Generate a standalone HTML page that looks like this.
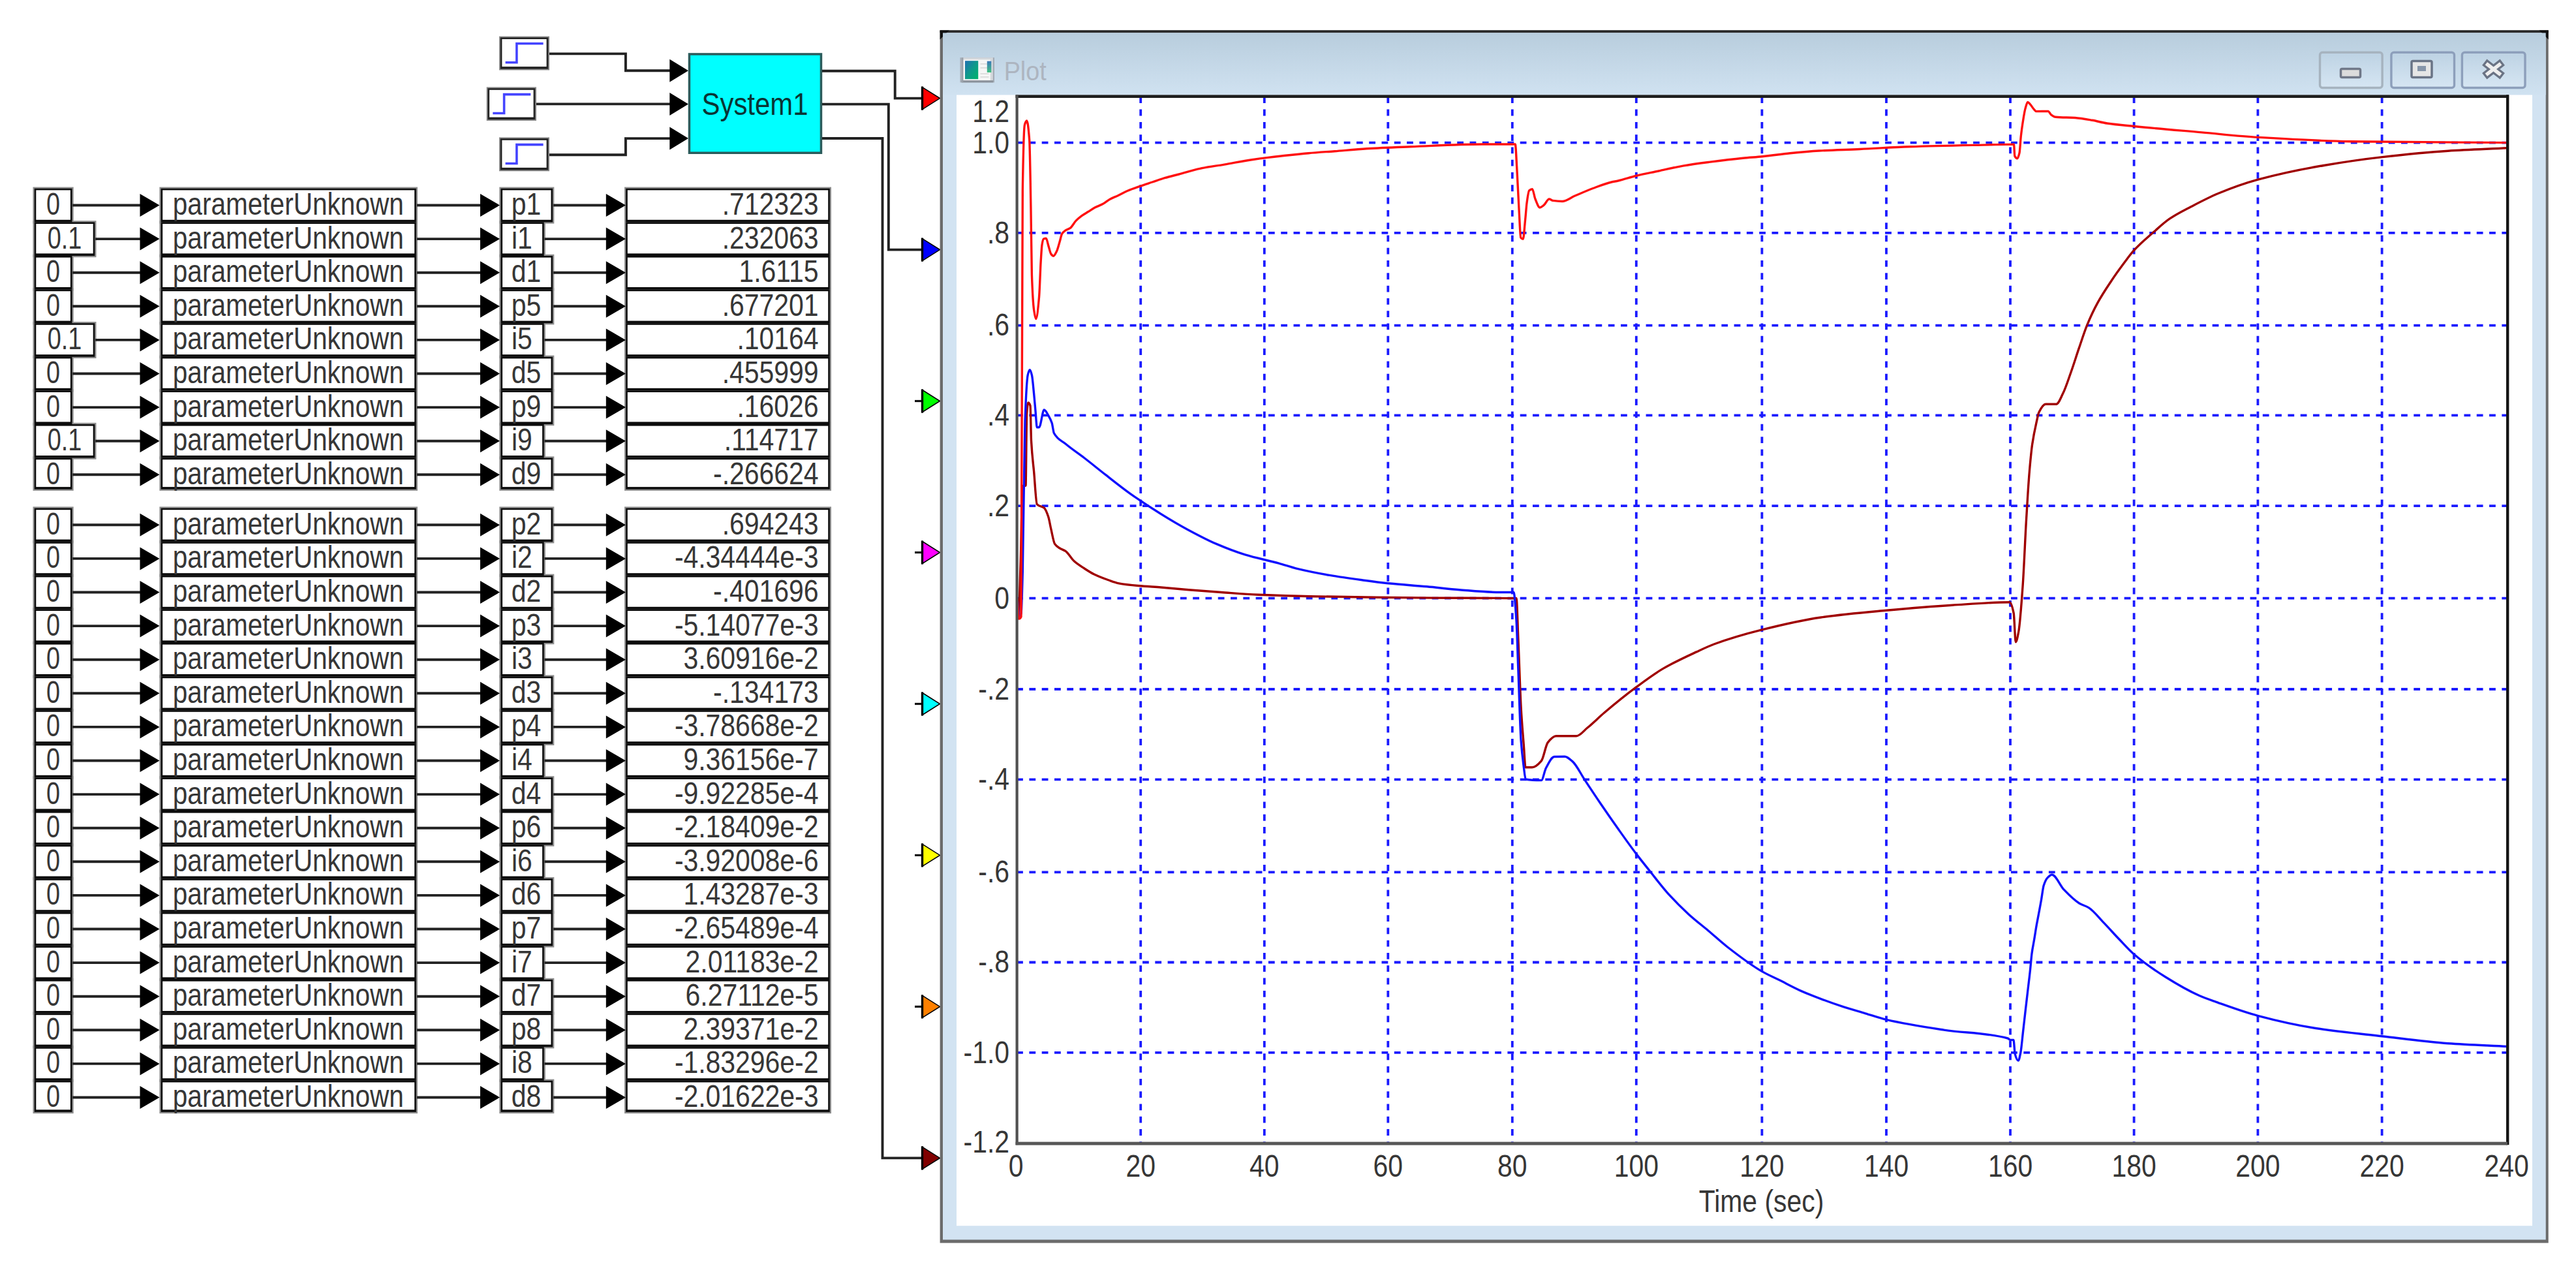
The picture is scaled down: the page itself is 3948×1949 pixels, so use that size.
<!DOCTYPE html>
<html><head><meta charset="utf-8"><style>
html,body{margin:0;padding:0;background:#fff;}
body{width:3948px;height:1949px;overflow:hidden;}
svg{display:block;}
text{font-family:"Liberation Sans", sans-serif;}
</style></head><body>
<div id="wrap"><svg width="3948" height="1949" viewBox="0 0 3948 1949">
<rect x="50.5" y="286.6" width="62.2" height="56.0" fill="#8e8e8e"/>
<rect x="244.4" y="286.6" width="395.6" height="56.0" fill="#8e8e8e"/>
<rect x="765.3" y="286.6" width="84.0" height="56.0" fill="#8e8e8e"/>
<rect x="957.0" y="286.6" width="317.0" height="56.0" fill="#8e8e8e"/>
<rect x="50.5" y="338.2" width="97.0" height="56.0" fill="#8e8e8e"/>
<rect x="244.4" y="338.2" width="395.6" height="56.0" fill="#8e8e8e"/>
<rect x="765.3" y="338.2" width="70.6" height="56.0" fill="#8e8e8e"/>
<rect x="957.0" y="338.2" width="317.0" height="56.0" fill="#8e8e8e"/>
<rect x="50.5" y="389.8" width="62.2" height="56.0" fill="#8e8e8e"/>
<rect x="244.4" y="389.8" width="395.6" height="56.0" fill="#8e8e8e"/>
<rect x="765.3" y="389.8" width="84.0" height="56.0" fill="#8e8e8e"/>
<rect x="957.0" y="389.8" width="317.0" height="56.0" fill="#8e8e8e"/>
<rect x="50.5" y="441.4" width="62.2" height="56.0" fill="#8e8e8e"/>
<rect x="244.4" y="441.4" width="395.6" height="56.0" fill="#8e8e8e"/>
<rect x="765.3" y="441.4" width="84.0" height="56.0" fill="#8e8e8e"/>
<rect x="957.0" y="441.4" width="317.0" height="56.0" fill="#8e8e8e"/>
<rect x="50.5" y="493.0" width="97.0" height="56.0" fill="#8e8e8e"/>
<rect x="244.4" y="493.0" width="395.6" height="56.0" fill="#8e8e8e"/>
<rect x="765.3" y="493.0" width="70.6" height="56.0" fill="#8e8e8e"/>
<rect x="957.0" y="493.0" width="317.0" height="56.0" fill="#8e8e8e"/>
<rect x="50.5" y="544.6" width="62.2" height="56.0" fill="#8e8e8e"/>
<rect x="244.4" y="544.6" width="395.6" height="56.0" fill="#8e8e8e"/>
<rect x="765.3" y="544.6" width="84.0" height="56.0" fill="#8e8e8e"/>
<rect x="957.0" y="544.6" width="317.0" height="56.0" fill="#8e8e8e"/>
<rect x="50.5" y="596.2" width="62.2" height="56.0" fill="#8e8e8e"/>
<rect x="244.4" y="596.2" width="395.6" height="56.0" fill="#8e8e8e"/>
<rect x="765.3" y="596.2" width="84.0" height="56.0" fill="#8e8e8e"/>
<rect x="957.0" y="596.2" width="317.0" height="56.0" fill="#8e8e8e"/>
<rect x="50.5" y="647.8" width="97.0" height="56.0" fill="#8e8e8e"/>
<rect x="244.4" y="647.8" width="395.6" height="56.0" fill="#8e8e8e"/>
<rect x="765.3" y="647.8" width="70.6" height="56.0" fill="#8e8e8e"/>
<rect x="957.0" y="647.8" width="317.0" height="56.0" fill="#8e8e8e"/>
<rect x="50.5" y="699.4" width="62.2" height="52.5" fill="#8e8e8e"/>
<rect x="244.4" y="699.4" width="395.6" height="52.5" fill="#8e8e8e"/>
<rect x="765.3" y="699.4" width="84.0" height="52.5" fill="#8e8e8e"/>
<rect x="957.0" y="699.4" width="317.0" height="52.5" fill="#8e8e8e"/>
<rect x="50.5" y="776.4" width="62.2" height="56.0" fill="#8e8e8e"/>
<rect x="244.4" y="776.4" width="395.6" height="56.0" fill="#8e8e8e"/>
<rect x="765.3" y="776.4" width="84.0" height="56.0" fill="#8e8e8e"/>
<rect x="957.0" y="776.4" width="317.0" height="56.0" fill="#8e8e8e"/>
<rect x="50.5" y="828.0" width="62.2" height="56.0" fill="#8e8e8e"/>
<rect x="244.4" y="828.0" width="395.6" height="56.0" fill="#8e8e8e"/>
<rect x="765.3" y="828.0" width="70.6" height="56.0" fill="#8e8e8e"/>
<rect x="957.0" y="828.0" width="317.0" height="56.0" fill="#8e8e8e"/>
<rect x="50.5" y="879.6" width="62.2" height="56.0" fill="#8e8e8e"/>
<rect x="244.4" y="879.6" width="395.6" height="56.0" fill="#8e8e8e"/>
<rect x="765.3" y="879.6" width="84.0" height="56.0" fill="#8e8e8e"/>
<rect x="957.0" y="879.6" width="317.0" height="56.0" fill="#8e8e8e"/>
<rect x="50.5" y="931.2" width="62.2" height="56.0" fill="#8e8e8e"/>
<rect x="244.4" y="931.2" width="395.6" height="56.0" fill="#8e8e8e"/>
<rect x="765.3" y="931.2" width="84.0" height="56.0" fill="#8e8e8e"/>
<rect x="957.0" y="931.2" width="317.0" height="56.0" fill="#8e8e8e"/>
<rect x="50.5" y="982.8" width="62.2" height="56.0" fill="#8e8e8e"/>
<rect x="244.4" y="982.8" width="395.6" height="56.0" fill="#8e8e8e"/>
<rect x="765.3" y="982.8" width="70.6" height="56.0" fill="#8e8e8e"/>
<rect x="957.0" y="982.8" width="317.0" height="56.0" fill="#8e8e8e"/>
<rect x="50.5" y="1034.4" width="62.2" height="56.0" fill="#8e8e8e"/>
<rect x="244.4" y="1034.4" width="395.6" height="56.0" fill="#8e8e8e"/>
<rect x="765.3" y="1034.4" width="84.0" height="56.0" fill="#8e8e8e"/>
<rect x="957.0" y="1034.4" width="317.0" height="56.0" fill="#8e8e8e"/>
<rect x="50.5" y="1086.0" width="62.2" height="56.0" fill="#8e8e8e"/>
<rect x="244.4" y="1086.0" width="395.6" height="56.0" fill="#8e8e8e"/>
<rect x="765.3" y="1086.0" width="84.0" height="56.0" fill="#8e8e8e"/>
<rect x="957.0" y="1086.0" width="317.0" height="56.0" fill="#8e8e8e"/>
<rect x="50.5" y="1137.6" width="62.2" height="56.0" fill="#8e8e8e"/>
<rect x="244.4" y="1137.6" width="395.6" height="56.0" fill="#8e8e8e"/>
<rect x="765.3" y="1137.6" width="70.6" height="56.0" fill="#8e8e8e"/>
<rect x="957.0" y="1137.6" width="317.0" height="56.0" fill="#8e8e8e"/>
<rect x="50.5" y="1189.2" width="62.2" height="56.0" fill="#8e8e8e"/>
<rect x="244.4" y="1189.2" width="395.6" height="56.0" fill="#8e8e8e"/>
<rect x="765.3" y="1189.2" width="84.0" height="56.0" fill="#8e8e8e"/>
<rect x="957.0" y="1189.2" width="317.0" height="56.0" fill="#8e8e8e"/>
<rect x="50.5" y="1240.8" width="62.2" height="56.0" fill="#8e8e8e"/>
<rect x="244.4" y="1240.8" width="395.6" height="56.0" fill="#8e8e8e"/>
<rect x="765.3" y="1240.8" width="84.0" height="56.0" fill="#8e8e8e"/>
<rect x="957.0" y="1240.8" width="317.0" height="56.0" fill="#8e8e8e"/>
<rect x="50.5" y="1292.4" width="62.2" height="56.0" fill="#8e8e8e"/>
<rect x="244.4" y="1292.4" width="395.6" height="56.0" fill="#8e8e8e"/>
<rect x="765.3" y="1292.4" width="70.6" height="56.0" fill="#8e8e8e"/>
<rect x="957.0" y="1292.4" width="317.0" height="56.0" fill="#8e8e8e"/>
<rect x="50.5" y="1344.0" width="62.2" height="56.0" fill="#8e8e8e"/>
<rect x="244.4" y="1344.0" width="395.6" height="56.0" fill="#8e8e8e"/>
<rect x="765.3" y="1344.0" width="84.0" height="56.0" fill="#8e8e8e"/>
<rect x="957.0" y="1344.0" width="317.0" height="56.0" fill="#8e8e8e"/>
<rect x="50.5" y="1395.6" width="62.2" height="56.0" fill="#8e8e8e"/>
<rect x="244.4" y="1395.6" width="395.6" height="56.0" fill="#8e8e8e"/>
<rect x="765.3" y="1395.6" width="84.0" height="56.0" fill="#8e8e8e"/>
<rect x="957.0" y="1395.6" width="317.0" height="56.0" fill="#8e8e8e"/>
<rect x="50.5" y="1447.2" width="62.2" height="56.0" fill="#8e8e8e"/>
<rect x="244.4" y="1447.2" width="395.6" height="56.0" fill="#8e8e8e"/>
<rect x="765.3" y="1447.2" width="70.6" height="56.0" fill="#8e8e8e"/>
<rect x="957.0" y="1447.2" width="317.0" height="56.0" fill="#8e8e8e"/>
<rect x="50.5" y="1498.8" width="62.2" height="56.0" fill="#8e8e8e"/>
<rect x="244.4" y="1498.8" width="395.6" height="56.0" fill="#8e8e8e"/>
<rect x="765.3" y="1498.8" width="84.0" height="56.0" fill="#8e8e8e"/>
<rect x="957.0" y="1498.8" width="317.0" height="56.0" fill="#8e8e8e"/>
<rect x="50.5" y="1550.4" width="62.2" height="56.0" fill="#8e8e8e"/>
<rect x="244.4" y="1550.4" width="395.6" height="56.0" fill="#8e8e8e"/>
<rect x="765.3" y="1550.4" width="84.0" height="56.0" fill="#8e8e8e"/>
<rect x="957.0" y="1550.4" width="317.0" height="56.0" fill="#8e8e8e"/>
<rect x="50.5" y="1602.0" width="62.2" height="56.0" fill="#8e8e8e"/>
<rect x="244.4" y="1602.0" width="395.6" height="56.0" fill="#8e8e8e"/>
<rect x="765.3" y="1602.0" width="70.6" height="56.0" fill="#8e8e8e"/>
<rect x="957.0" y="1602.0" width="317.0" height="56.0" fill="#8e8e8e"/>
<rect x="50.5" y="1653.6" width="62.2" height="52.5" fill="#8e8e8e"/>
<rect x="244.4" y="1653.6" width="395.6" height="52.5" fill="#8e8e8e"/>
<rect x="765.3" y="1653.6" width="84.0" height="52.5" fill="#8e8e8e"/>
<rect x="957.0" y="1653.6" width="317.0" height="52.5" fill="#8e8e8e"/>
<rect x="52.7" y="288.8" width="57.8" height="51.6" fill="#0c0c0c"/>
<rect x="246.6" y="288.8" width="391.2" height="51.6" fill="#0c0c0c"/>
<rect x="767.5" y="288.8" width="79.6" height="51.6" fill="#0c0c0c"/>
<rect x="959.2" y="288.8" width="312.6" height="51.6" fill="#0c0c0c"/>
<rect x="52.7" y="340.4" width="92.6" height="51.6" fill="#0c0c0c"/>
<rect x="246.6" y="340.4" width="391.2" height="51.6" fill="#0c0c0c"/>
<rect x="767.5" y="340.4" width="66.2" height="51.6" fill="#0c0c0c"/>
<rect x="959.2" y="340.4" width="312.6" height="51.6" fill="#0c0c0c"/>
<rect x="52.7" y="392.0" width="57.8" height="51.6" fill="#0c0c0c"/>
<rect x="246.6" y="392.0" width="391.2" height="51.6" fill="#0c0c0c"/>
<rect x="767.5" y="392.0" width="79.6" height="51.6" fill="#0c0c0c"/>
<rect x="959.2" y="392.0" width="312.6" height="51.6" fill="#0c0c0c"/>
<rect x="52.7" y="443.6" width="57.8" height="51.6" fill="#0c0c0c"/>
<rect x="246.6" y="443.6" width="391.2" height="51.6" fill="#0c0c0c"/>
<rect x="767.5" y="443.6" width="79.6" height="51.6" fill="#0c0c0c"/>
<rect x="959.2" y="443.6" width="312.6" height="51.6" fill="#0c0c0c"/>
<rect x="52.7" y="495.2" width="92.6" height="51.6" fill="#0c0c0c"/>
<rect x="246.6" y="495.2" width="391.2" height="51.6" fill="#0c0c0c"/>
<rect x="767.5" y="495.2" width="66.2" height="51.6" fill="#0c0c0c"/>
<rect x="959.2" y="495.2" width="312.6" height="51.6" fill="#0c0c0c"/>
<rect x="52.7" y="546.8" width="57.8" height="51.6" fill="#0c0c0c"/>
<rect x="246.6" y="546.8" width="391.2" height="51.6" fill="#0c0c0c"/>
<rect x="767.5" y="546.8" width="79.6" height="51.6" fill="#0c0c0c"/>
<rect x="959.2" y="546.8" width="312.6" height="51.6" fill="#0c0c0c"/>
<rect x="52.7" y="598.4" width="57.8" height="51.6" fill="#0c0c0c"/>
<rect x="246.6" y="598.4" width="391.2" height="51.6" fill="#0c0c0c"/>
<rect x="767.5" y="598.4" width="79.6" height="51.6" fill="#0c0c0c"/>
<rect x="959.2" y="598.4" width="312.6" height="51.6" fill="#0c0c0c"/>
<rect x="52.7" y="650.0" width="92.6" height="51.6" fill="#0c0c0c"/>
<rect x="246.6" y="650.0" width="391.2" height="51.6" fill="#0c0c0c"/>
<rect x="767.5" y="650.0" width="66.2" height="51.6" fill="#0c0c0c"/>
<rect x="959.2" y="650.0" width="312.6" height="51.6" fill="#0c0c0c"/>
<rect x="52.7" y="701.6" width="57.8" height="48.1" fill="#0c0c0c"/>
<rect x="246.6" y="701.6" width="391.2" height="48.1" fill="#0c0c0c"/>
<rect x="767.5" y="701.6" width="79.6" height="48.1" fill="#0c0c0c"/>
<rect x="959.2" y="701.6" width="312.6" height="48.1" fill="#0c0c0c"/>
<rect x="52.7" y="778.6" width="57.8" height="51.6" fill="#0c0c0c"/>
<rect x="246.6" y="778.6" width="391.2" height="51.6" fill="#0c0c0c"/>
<rect x="767.5" y="778.6" width="79.6" height="51.6" fill="#0c0c0c"/>
<rect x="959.2" y="778.6" width="312.6" height="51.6" fill="#0c0c0c"/>
<rect x="52.7" y="830.2" width="57.8" height="51.6" fill="#0c0c0c"/>
<rect x="246.6" y="830.2" width="391.2" height="51.6" fill="#0c0c0c"/>
<rect x="767.5" y="830.2" width="66.2" height="51.6" fill="#0c0c0c"/>
<rect x="959.2" y="830.2" width="312.6" height="51.6" fill="#0c0c0c"/>
<rect x="52.7" y="881.8" width="57.8" height="51.6" fill="#0c0c0c"/>
<rect x="246.6" y="881.8" width="391.2" height="51.6" fill="#0c0c0c"/>
<rect x="767.5" y="881.8" width="79.6" height="51.6" fill="#0c0c0c"/>
<rect x="959.2" y="881.8" width="312.6" height="51.6" fill="#0c0c0c"/>
<rect x="52.7" y="933.4" width="57.8" height="51.6" fill="#0c0c0c"/>
<rect x="246.6" y="933.4" width="391.2" height="51.6" fill="#0c0c0c"/>
<rect x="767.5" y="933.4" width="79.6" height="51.6" fill="#0c0c0c"/>
<rect x="959.2" y="933.4" width="312.6" height="51.6" fill="#0c0c0c"/>
<rect x="52.7" y="985.0" width="57.8" height="51.6" fill="#0c0c0c"/>
<rect x="246.6" y="985.0" width="391.2" height="51.6" fill="#0c0c0c"/>
<rect x="767.5" y="985.0" width="66.2" height="51.6" fill="#0c0c0c"/>
<rect x="959.2" y="985.0" width="312.6" height="51.6" fill="#0c0c0c"/>
<rect x="52.7" y="1036.6" width="57.8" height="51.6" fill="#0c0c0c"/>
<rect x="246.6" y="1036.6" width="391.2" height="51.6" fill="#0c0c0c"/>
<rect x="767.5" y="1036.6" width="79.6" height="51.6" fill="#0c0c0c"/>
<rect x="959.2" y="1036.6" width="312.6" height="51.6" fill="#0c0c0c"/>
<rect x="52.7" y="1088.2" width="57.8" height="51.6" fill="#0c0c0c"/>
<rect x="246.6" y="1088.2" width="391.2" height="51.6" fill="#0c0c0c"/>
<rect x="767.5" y="1088.2" width="79.6" height="51.6" fill="#0c0c0c"/>
<rect x="959.2" y="1088.2" width="312.6" height="51.6" fill="#0c0c0c"/>
<rect x="52.7" y="1139.8" width="57.8" height="51.6" fill="#0c0c0c"/>
<rect x="246.6" y="1139.8" width="391.2" height="51.6" fill="#0c0c0c"/>
<rect x="767.5" y="1139.8" width="66.2" height="51.6" fill="#0c0c0c"/>
<rect x="959.2" y="1139.8" width="312.6" height="51.6" fill="#0c0c0c"/>
<rect x="52.7" y="1191.4" width="57.8" height="51.6" fill="#0c0c0c"/>
<rect x="246.6" y="1191.4" width="391.2" height="51.6" fill="#0c0c0c"/>
<rect x="767.5" y="1191.4" width="79.6" height="51.6" fill="#0c0c0c"/>
<rect x="959.2" y="1191.4" width="312.6" height="51.6" fill="#0c0c0c"/>
<rect x="52.7" y="1243.0" width="57.8" height="51.6" fill="#0c0c0c"/>
<rect x="246.6" y="1243.0" width="391.2" height="51.6" fill="#0c0c0c"/>
<rect x="767.5" y="1243.0" width="79.6" height="51.6" fill="#0c0c0c"/>
<rect x="959.2" y="1243.0" width="312.6" height="51.6" fill="#0c0c0c"/>
<rect x="52.7" y="1294.6" width="57.8" height="51.6" fill="#0c0c0c"/>
<rect x="246.6" y="1294.6" width="391.2" height="51.6" fill="#0c0c0c"/>
<rect x="767.5" y="1294.6" width="66.2" height="51.6" fill="#0c0c0c"/>
<rect x="959.2" y="1294.6" width="312.6" height="51.6" fill="#0c0c0c"/>
<rect x="52.7" y="1346.2" width="57.8" height="51.6" fill="#0c0c0c"/>
<rect x="246.6" y="1346.2" width="391.2" height="51.6" fill="#0c0c0c"/>
<rect x="767.5" y="1346.2" width="79.6" height="51.6" fill="#0c0c0c"/>
<rect x="959.2" y="1346.2" width="312.6" height="51.6" fill="#0c0c0c"/>
<rect x="52.7" y="1397.8" width="57.8" height="51.6" fill="#0c0c0c"/>
<rect x="246.6" y="1397.8" width="391.2" height="51.6" fill="#0c0c0c"/>
<rect x="767.5" y="1397.8" width="79.6" height="51.6" fill="#0c0c0c"/>
<rect x="959.2" y="1397.8" width="312.6" height="51.6" fill="#0c0c0c"/>
<rect x="52.7" y="1449.4" width="57.8" height="51.6" fill="#0c0c0c"/>
<rect x="246.6" y="1449.4" width="391.2" height="51.6" fill="#0c0c0c"/>
<rect x="767.5" y="1449.4" width="66.2" height="51.6" fill="#0c0c0c"/>
<rect x="959.2" y="1449.4" width="312.6" height="51.6" fill="#0c0c0c"/>
<rect x="52.7" y="1501.0" width="57.8" height="51.6" fill="#0c0c0c"/>
<rect x="246.6" y="1501.0" width="391.2" height="51.6" fill="#0c0c0c"/>
<rect x="767.5" y="1501.0" width="79.6" height="51.6" fill="#0c0c0c"/>
<rect x="959.2" y="1501.0" width="312.6" height="51.6" fill="#0c0c0c"/>
<rect x="52.7" y="1552.6" width="57.8" height="51.6" fill="#0c0c0c"/>
<rect x="246.6" y="1552.6" width="391.2" height="51.6" fill="#0c0c0c"/>
<rect x="767.5" y="1552.6" width="79.6" height="51.6" fill="#0c0c0c"/>
<rect x="959.2" y="1552.6" width="312.6" height="51.6" fill="#0c0c0c"/>
<rect x="52.7" y="1604.2" width="57.8" height="51.6" fill="#0c0c0c"/>
<rect x="246.6" y="1604.2" width="391.2" height="51.6" fill="#0c0c0c"/>
<rect x="767.5" y="1604.2" width="66.2" height="51.6" fill="#0c0c0c"/>
<rect x="959.2" y="1604.2" width="312.6" height="51.6" fill="#0c0c0c"/>
<rect x="52.7" y="1655.8" width="57.8" height="48.1" fill="#0c0c0c"/>
<rect x="246.6" y="1655.8" width="391.2" height="48.1" fill="#0c0c0c"/>
<rect x="767.5" y="1655.8" width="79.6" height="48.1" fill="#0c0c0c"/>
<rect x="959.2" y="1655.8" width="312.6" height="48.1" fill="#0c0c0c"/>
<rect x="55.3" y="291.4" width="52.6" height="45.4" fill="#fff"/>
<rect x="249.2" y="291.4" width="386.0" height="45.4" fill="#fff"/>
<rect x="770.1" y="291.4" width="74.4" height="45.4" fill="#fff"/>
<rect x="961.8" y="291.4" width="307.4" height="45.4" fill="#fff"/>
<rect x="55.3" y="343.0" width="87.4" height="45.4" fill="#fff"/>
<rect x="249.2" y="343.0" width="386.0" height="45.4" fill="#fff"/>
<rect x="770.1" y="343.0" width="61.0" height="45.4" fill="#fff"/>
<rect x="961.8" y="343.0" width="307.4" height="45.4" fill="#fff"/>
<rect x="55.3" y="394.6" width="52.6" height="45.4" fill="#fff"/>
<rect x="249.2" y="394.6" width="386.0" height="45.4" fill="#fff"/>
<rect x="770.1" y="394.6" width="74.4" height="45.4" fill="#fff"/>
<rect x="961.8" y="394.6" width="307.4" height="45.4" fill="#fff"/>
<rect x="55.3" y="446.2" width="52.6" height="45.4" fill="#fff"/>
<rect x="249.2" y="446.2" width="386.0" height="45.4" fill="#fff"/>
<rect x="770.1" y="446.2" width="74.4" height="45.4" fill="#fff"/>
<rect x="961.8" y="446.2" width="307.4" height="45.4" fill="#fff"/>
<rect x="55.3" y="497.8" width="87.4" height="45.4" fill="#fff"/>
<rect x="249.2" y="497.8" width="386.0" height="45.4" fill="#fff"/>
<rect x="770.1" y="497.8" width="61.0" height="45.4" fill="#fff"/>
<rect x="961.8" y="497.8" width="307.4" height="45.4" fill="#fff"/>
<rect x="55.3" y="549.4" width="52.6" height="45.4" fill="#fff"/>
<rect x="249.2" y="549.4" width="386.0" height="45.4" fill="#fff"/>
<rect x="770.1" y="549.4" width="74.4" height="45.4" fill="#fff"/>
<rect x="961.8" y="549.4" width="307.4" height="45.4" fill="#fff"/>
<rect x="55.3" y="601.0" width="52.6" height="45.4" fill="#fff"/>
<rect x="249.2" y="601.0" width="386.0" height="45.4" fill="#fff"/>
<rect x="770.1" y="601.0" width="74.4" height="45.4" fill="#fff"/>
<rect x="961.8" y="601.0" width="307.4" height="45.4" fill="#fff"/>
<rect x="55.3" y="652.6" width="87.4" height="45.4" fill="#fff"/>
<rect x="249.2" y="652.6" width="386.0" height="45.4" fill="#fff"/>
<rect x="770.1" y="652.6" width="61.0" height="45.4" fill="#fff"/>
<rect x="961.8" y="652.6" width="307.4" height="45.4" fill="#fff"/>
<rect x="55.3" y="704.2" width="52.6" height="41.9" fill="#fff"/>
<rect x="249.2" y="704.2" width="386.0" height="41.9" fill="#fff"/>
<rect x="770.1" y="704.2" width="74.4" height="41.9" fill="#fff"/>
<rect x="961.8" y="704.2" width="307.4" height="41.9" fill="#fff"/>
<rect x="55.3" y="781.2" width="52.6" height="45.4" fill="#fff"/>
<rect x="249.2" y="781.2" width="386.0" height="45.4" fill="#fff"/>
<rect x="770.1" y="781.2" width="74.4" height="45.4" fill="#fff"/>
<rect x="961.8" y="781.2" width="307.4" height="45.4" fill="#fff"/>
<rect x="55.3" y="832.8" width="52.6" height="45.4" fill="#fff"/>
<rect x="249.2" y="832.8" width="386.0" height="45.4" fill="#fff"/>
<rect x="770.1" y="832.8" width="61.0" height="45.4" fill="#fff"/>
<rect x="961.8" y="832.8" width="307.4" height="45.4" fill="#fff"/>
<rect x="55.3" y="884.4" width="52.6" height="45.4" fill="#fff"/>
<rect x="249.2" y="884.4" width="386.0" height="45.4" fill="#fff"/>
<rect x="770.1" y="884.4" width="74.4" height="45.4" fill="#fff"/>
<rect x="961.8" y="884.4" width="307.4" height="45.4" fill="#fff"/>
<rect x="55.3" y="936.0" width="52.6" height="45.4" fill="#fff"/>
<rect x="249.2" y="936.0" width="386.0" height="45.4" fill="#fff"/>
<rect x="770.1" y="936.0" width="74.4" height="45.4" fill="#fff"/>
<rect x="961.8" y="936.0" width="307.4" height="45.4" fill="#fff"/>
<rect x="55.3" y="987.6" width="52.6" height="45.4" fill="#fff"/>
<rect x="249.2" y="987.6" width="386.0" height="45.4" fill="#fff"/>
<rect x="770.1" y="987.6" width="61.0" height="45.4" fill="#fff"/>
<rect x="961.8" y="987.6" width="307.4" height="45.4" fill="#fff"/>
<rect x="55.3" y="1039.2" width="52.6" height="45.4" fill="#fff"/>
<rect x="249.2" y="1039.2" width="386.0" height="45.4" fill="#fff"/>
<rect x="770.1" y="1039.2" width="74.4" height="45.4" fill="#fff"/>
<rect x="961.8" y="1039.2" width="307.4" height="45.4" fill="#fff"/>
<rect x="55.3" y="1090.8" width="52.6" height="45.4" fill="#fff"/>
<rect x="249.2" y="1090.8" width="386.0" height="45.4" fill="#fff"/>
<rect x="770.1" y="1090.8" width="74.4" height="45.4" fill="#fff"/>
<rect x="961.8" y="1090.8" width="307.4" height="45.4" fill="#fff"/>
<rect x="55.3" y="1142.4" width="52.6" height="45.4" fill="#fff"/>
<rect x="249.2" y="1142.4" width="386.0" height="45.4" fill="#fff"/>
<rect x="770.1" y="1142.4" width="61.0" height="45.4" fill="#fff"/>
<rect x="961.8" y="1142.4" width="307.4" height="45.4" fill="#fff"/>
<rect x="55.3" y="1194.0" width="52.6" height="45.4" fill="#fff"/>
<rect x="249.2" y="1194.0" width="386.0" height="45.4" fill="#fff"/>
<rect x="770.1" y="1194.0" width="74.4" height="45.4" fill="#fff"/>
<rect x="961.8" y="1194.0" width="307.4" height="45.4" fill="#fff"/>
<rect x="55.3" y="1245.6" width="52.6" height="45.4" fill="#fff"/>
<rect x="249.2" y="1245.6" width="386.0" height="45.4" fill="#fff"/>
<rect x="770.1" y="1245.6" width="74.4" height="45.4" fill="#fff"/>
<rect x="961.8" y="1245.6" width="307.4" height="45.4" fill="#fff"/>
<rect x="55.3" y="1297.2" width="52.6" height="45.4" fill="#fff"/>
<rect x="249.2" y="1297.2" width="386.0" height="45.4" fill="#fff"/>
<rect x="770.1" y="1297.2" width="61.0" height="45.4" fill="#fff"/>
<rect x="961.8" y="1297.2" width="307.4" height="45.4" fill="#fff"/>
<rect x="55.3" y="1348.8" width="52.6" height="45.4" fill="#fff"/>
<rect x="249.2" y="1348.8" width="386.0" height="45.4" fill="#fff"/>
<rect x="770.1" y="1348.8" width="74.4" height="45.4" fill="#fff"/>
<rect x="961.8" y="1348.8" width="307.4" height="45.4" fill="#fff"/>
<rect x="55.3" y="1400.4" width="52.6" height="45.4" fill="#fff"/>
<rect x="249.2" y="1400.4" width="386.0" height="45.4" fill="#fff"/>
<rect x="770.1" y="1400.4" width="74.4" height="45.4" fill="#fff"/>
<rect x="961.8" y="1400.4" width="307.4" height="45.4" fill="#fff"/>
<rect x="55.3" y="1452.0" width="52.6" height="45.4" fill="#fff"/>
<rect x="249.2" y="1452.0" width="386.0" height="45.4" fill="#fff"/>
<rect x="770.1" y="1452.0" width="61.0" height="45.4" fill="#fff"/>
<rect x="961.8" y="1452.0" width="307.4" height="45.4" fill="#fff"/>
<rect x="55.3" y="1503.6" width="52.6" height="45.4" fill="#fff"/>
<rect x="249.2" y="1503.6" width="386.0" height="45.4" fill="#fff"/>
<rect x="770.1" y="1503.6" width="74.4" height="45.4" fill="#fff"/>
<rect x="961.8" y="1503.6" width="307.4" height="45.4" fill="#fff"/>
<rect x="55.3" y="1555.2" width="52.6" height="45.4" fill="#fff"/>
<rect x="249.2" y="1555.2" width="386.0" height="45.4" fill="#fff"/>
<rect x="770.1" y="1555.2" width="74.4" height="45.4" fill="#fff"/>
<rect x="961.8" y="1555.2" width="307.4" height="45.4" fill="#fff"/>
<rect x="55.3" y="1606.8" width="52.6" height="45.4" fill="#fff"/>
<rect x="249.2" y="1606.8" width="386.0" height="45.4" fill="#fff"/>
<rect x="770.1" y="1606.8" width="61.0" height="45.4" fill="#fff"/>
<rect x="961.8" y="1606.8" width="307.4" height="45.4" fill="#fff"/>
<rect x="55.3" y="1658.4" width="52.6" height="41.9" fill="#fff"/>
<rect x="249.2" y="1658.4" width="386.0" height="41.9" fill="#fff"/>
<rect x="770.1" y="1658.4" width="74.4" height="41.9" fill="#fff"/>
<rect x="961.8" y="1658.4" width="307.4" height="41.9" fill="#fff"/>
<polyline points="111.2,314.5 215.0,314.5" fill="none" stroke="#222222" stroke-width="3.9" stroke-linejoin="miter"/>
<polygon points="214.5,297.0 244.5,314.5 214.5,332.0" fill="#000"/>
<polyline points="638.9,314.5 737.0,314.5" fill="none" stroke="#222222" stroke-width="3.9" stroke-linejoin="miter"/>
<polygon points="736.0,297.0 766.0,314.5 736.0,332.0" fill="#000"/>
<polyline points="847.8,314.5 930.0,314.5" fill="none" stroke="#222222" stroke-width="3.9" stroke-linejoin="miter"/>
<polygon points="928.8,297.0 959.0,314.5 928.8,332.0" fill="#000"/>
<polyline points="146.0,366.1 215.0,366.1" fill="none" stroke="#222222" stroke-width="3.9" stroke-linejoin="miter"/>
<polygon points="214.5,348.6 244.5,366.1 214.5,383.6" fill="#000"/>
<polyline points="638.9,366.1 737.0,366.1" fill="none" stroke="#222222" stroke-width="3.9" stroke-linejoin="miter"/>
<polygon points="736.0,348.6 766.0,366.1 736.0,383.6" fill="#000"/>
<polyline points="834.4,366.1 930.0,366.1" fill="none" stroke="#222222" stroke-width="3.9" stroke-linejoin="miter"/>
<polygon points="928.8,348.6 959.0,366.1 928.8,383.6" fill="#000"/>
<polyline points="111.2,417.7 215.0,417.7" fill="none" stroke="#222222" stroke-width="3.9" stroke-linejoin="miter"/>
<polygon points="214.5,400.2 244.5,417.7 214.5,435.2" fill="#000"/>
<polyline points="638.9,417.7 737.0,417.7" fill="none" stroke="#222222" stroke-width="3.9" stroke-linejoin="miter"/>
<polygon points="736.0,400.2 766.0,417.7 736.0,435.2" fill="#000"/>
<polyline points="847.8,417.7 930.0,417.7" fill="none" stroke="#222222" stroke-width="3.9" stroke-linejoin="miter"/>
<polygon points="928.8,400.2 959.0,417.7 928.8,435.2" fill="#000"/>
<polyline points="111.2,469.3 215.0,469.3" fill="none" stroke="#222222" stroke-width="3.9" stroke-linejoin="miter"/>
<polygon points="214.5,451.8 244.5,469.3 214.5,486.8" fill="#000"/>
<polyline points="638.9,469.3 737.0,469.3" fill="none" stroke="#222222" stroke-width="3.9" stroke-linejoin="miter"/>
<polygon points="736.0,451.8 766.0,469.3 736.0,486.8" fill="#000"/>
<polyline points="847.8,469.3 930.0,469.3" fill="none" stroke="#222222" stroke-width="3.9" stroke-linejoin="miter"/>
<polygon points="928.8,451.8 959.0,469.3 928.8,486.8" fill="#000"/>
<polyline points="146.0,520.9 215.0,520.9" fill="none" stroke="#222222" stroke-width="3.9" stroke-linejoin="miter"/>
<polygon points="214.5,503.4 244.5,520.9 214.5,538.4" fill="#000"/>
<polyline points="638.9,520.9 737.0,520.9" fill="none" stroke="#222222" stroke-width="3.9" stroke-linejoin="miter"/>
<polygon points="736.0,503.4 766.0,520.9 736.0,538.4" fill="#000"/>
<polyline points="834.4,520.9 930.0,520.9" fill="none" stroke="#222222" stroke-width="3.9" stroke-linejoin="miter"/>
<polygon points="928.8,503.4 959.0,520.9 928.8,538.4" fill="#000"/>
<polyline points="111.2,572.5 215.0,572.5" fill="none" stroke="#222222" stroke-width="3.9" stroke-linejoin="miter"/>
<polygon points="214.5,555.0 244.5,572.5 214.5,590.0" fill="#000"/>
<polyline points="638.9,572.5 737.0,572.5" fill="none" stroke="#222222" stroke-width="3.9" stroke-linejoin="miter"/>
<polygon points="736.0,555.0 766.0,572.5 736.0,590.0" fill="#000"/>
<polyline points="847.8,572.5 930.0,572.5" fill="none" stroke="#222222" stroke-width="3.9" stroke-linejoin="miter"/>
<polygon points="928.8,555.0 959.0,572.5 928.8,590.0" fill="#000"/>
<polyline points="111.2,624.1 215.0,624.1" fill="none" stroke="#222222" stroke-width="3.9" stroke-linejoin="miter"/>
<polygon points="214.5,606.6 244.5,624.1 214.5,641.6" fill="#000"/>
<polyline points="638.9,624.1 737.0,624.1" fill="none" stroke="#222222" stroke-width="3.9" stroke-linejoin="miter"/>
<polygon points="736.0,606.6 766.0,624.1 736.0,641.6" fill="#000"/>
<polyline points="847.8,624.1 930.0,624.1" fill="none" stroke="#222222" stroke-width="3.9" stroke-linejoin="miter"/>
<polygon points="928.8,606.6 959.0,624.1 928.8,641.6" fill="#000"/>
<polyline points="146.0,675.7 215.0,675.7" fill="none" stroke="#222222" stroke-width="3.9" stroke-linejoin="miter"/>
<polygon points="214.5,658.2 244.5,675.7 214.5,693.2" fill="#000"/>
<polyline points="638.9,675.7 737.0,675.7" fill="none" stroke="#222222" stroke-width="3.9" stroke-linejoin="miter"/>
<polygon points="736.0,658.2 766.0,675.7 736.0,693.2" fill="#000"/>
<polyline points="834.4,675.7 930.0,675.7" fill="none" stroke="#222222" stroke-width="3.9" stroke-linejoin="miter"/>
<polygon points="928.8,658.2 959.0,675.7 928.8,693.2" fill="#000"/>
<polyline points="111.2,727.3 215.0,727.3" fill="none" stroke="#222222" stroke-width="3.9" stroke-linejoin="miter"/>
<polygon points="214.5,709.8 244.5,727.3 214.5,744.8" fill="#000"/>
<polyline points="638.9,727.3 737.0,727.3" fill="none" stroke="#222222" stroke-width="3.9" stroke-linejoin="miter"/>
<polygon points="736.0,709.8 766.0,727.3 736.0,744.8" fill="#000"/>
<polyline points="847.8,727.3 930.0,727.3" fill="none" stroke="#222222" stroke-width="3.9" stroke-linejoin="miter"/>
<polygon points="928.8,709.8 959.0,727.3 928.8,744.8" fill="#000"/>
<polyline points="111.2,804.3 215.0,804.3" fill="none" stroke="#222222" stroke-width="3.9" stroke-linejoin="miter"/>
<polygon points="214.5,786.8 244.5,804.3 214.5,821.8" fill="#000"/>
<polyline points="638.9,804.3 737.0,804.3" fill="none" stroke="#222222" stroke-width="3.9" stroke-linejoin="miter"/>
<polygon points="736.0,786.8 766.0,804.3 736.0,821.8" fill="#000"/>
<polyline points="847.8,804.3 930.0,804.3" fill="none" stroke="#222222" stroke-width="3.9" stroke-linejoin="miter"/>
<polygon points="928.8,786.8 959.0,804.3 928.8,821.8" fill="#000"/>
<polyline points="111.2,855.9 215.0,855.9" fill="none" stroke="#222222" stroke-width="3.9" stroke-linejoin="miter"/>
<polygon points="214.5,838.4 244.5,855.9 214.5,873.4" fill="#000"/>
<polyline points="638.9,855.9 737.0,855.9" fill="none" stroke="#222222" stroke-width="3.9" stroke-linejoin="miter"/>
<polygon points="736.0,838.4 766.0,855.9 736.0,873.4" fill="#000"/>
<polyline points="834.4,855.9 930.0,855.9" fill="none" stroke="#222222" stroke-width="3.9" stroke-linejoin="miter"/>
<polygon points="928.8,838.4 959.0,855.9 928.8,873.4" fill="#000"/>
<polyline points="111.2,907.5 215.0,907.5" fill="none" stroke="#222222" stroke-width="3.9" stroke-linejoin="miter"/>
<polygon points="214.5,890.0 244.5,907.5 214.5,925.0" fill="#000"/>
<polyline points="638.9,907.5 737.0,907.5" fill="none" stroke="#222222" stroke-width="3.9" stroke-linejoin="miter"/>
<polygon points="736.0,890.0 766.0,907.5 736.0,925.0" fill="#000"/>
<polyline points="847.8,907.5 930.0,907.5" fill="none" stroke="#222222" stroke-width="3.9" stroke-linejoin="miter"/>
<polygon points="928.8,890.0 959.0,907.5 928.8,925.0" fill="#000"/>
<polyline points="111.2,959.1 215.0,959.1" fill="none" stroke="#222222" stroke-width="3.9" stroke-linejoin="miter"/>
<polygon points="214.5,941.6 244.5,959.1 214.5,976.6" fill="#000"/>
<polyline points="638.9,959.1 737.0,959.1" fill="none" stroke="#222222" stroke-width="3.9" stroke-linejoin="miter"/>
<polygon points="736.0,941.6 766.0,959.1 736.0,976.6" fill="#000"/>
<polyline points="847.8,959.1 930.0,959.1" fill="none" stroke="#222222" stroke-width="3.9" stroke-linejoin="miter"/>
<polygon points="928.8,941.6 959.0,959.1 928.8,976.6" fill="#000"/>
<polyline points="111.2,1010.7 215.0,1010.7" fill="none" stroke="#222222" stroke-width="3.9" stroke-linejoin="miter"/>
<polygon points="214.5,993.2 244.5,1010.7 214.5,1028.2" fill="#000"/>
<polyline points="638.9,1010.7 737.0,1010.7" fill="none" stroke="#222222" stroke-width="3.9" stroke-linejoin="miter"/>
<polygon points="736.0,993.2 766.0,1010.7 736.0,1028.2" fill="#000"/>
<polyline points="834.4,1010.7 930.0,1010.7" fill="none" stroke="#222222" stroke-width="3.9" stroke-linejoin="miter"/>
<polygon points="928.8,993.2 959.0,1010.7 928.8,1028.2" fill="#000"/>
<polyline points="111.2,1062.3 215.0,1062.3" fill="none" stroke="#222222" stroke-width="3.9" stroke-linejoin="miter"/>
<polygon points="214.5,1044.8 244.5,1062.3 214.5,1079.8" fill="#000"/>
<polyline points="638.9,1062.3 737.0,1062.3" fill="none" stroke="#222222" stroke-width="3.9" stroke-linejoin="miter"/>
<polygon points="736.0,1044.8 766.0,1062.3 736.0,1079.8" fill="#000"/>
<polyline points="847.8,1062.3 930.0,1062.3" fill="none" stroke="#222222" stroke-width="3.9" stroke-linejoin="miter"/>
<polygon points="928.8,1044.8 959.0,1062.3 928.8,1079.8" fill="#000"/>
<polyline points="111.2,1113.9 215.0,1113.9" fill="none" stroke="#222222" stroke-width="3.9" stroke-linejoin="miter"/>
<polygon points="214.5,1096.4 244.5,1113.9 214.5,1131.4" fill="#000"/>
<polyline points="638.9,1113.9 737.0,1113.9" fill="none" stroke="#222222" stroke-width="3.9" stroke-linejoin="miter"/>
<polygon points="736.0,1096.4 766.0,1113.9 736.0,1131.4" fill="#000"/>
<polyline points="847.8,1113.9 930.0,1113.9" fill="none" stroke="#222222" stroke-width="3.9" stroke-linejoin="miter"/>
<polygon points="928.8,1096.4 959.0,1113.9 928.8,1131.4" fill="#000"/>
<polyline points="111.2,1165.5 215.0,1165.5" fill="none" stroke="#222222" stroke-width="3.9" stroke-linejoin="miter"/>
<polygon points="214.5,1148.0 244.5,1165.5 214.5,1183.0" fill="#000"/>
<polyline points="638.9,1165.5 737.0,1165.5" fill="none" stroke="#222222" stroke-width="3.9" stroke-linejoin="miter"/>
<polygon points="736.0,1148.0 766.0,1165.5 736.0,1183.0" fill="#000"/>
<polyline points="834.4,1165.5 930.0,1165.5" fill="none" stroke="#222222" stroke-width="3.9" stroke-linejoin="miter"/>
<polygon points="928.8,1148.0 959.0,1165.5 928.8,1183.0" fill="#000"/>
<polyline points="111.2,1217.1 215.0,1217.1" fill="none" stroke="#222222" stroke-width="3.9" stroke-linejoin="miter"/>
<polygon points="214.5,1199.6 244.5,1217.1 214.5,1234.6" fill="#000"/>
<polyline points="638.9,1217.1 737.0,1217.1" fill="none" stroke="#222222" stroke-width="3.9" stroke-linejoin="miter"/>
<polygon points="736.0,1199.6 766.0,1217.1 736.0,1234.6" fill="#000"/>
<polyline points="847.8,1217.1 930.0,1217.1" fill="none" stroke="#222222" stroke-width="3.9" stroke-linejoin="miter"/>
<polygon points="928.8,1199.6 959.0,1217.1 928.8,1234.6" fill="#000"/>
<polyline points="111.2,1268.7 215.0,1268.7" fill="none" stroke="#222222" stroke-width="3.9" stroke-linejoin="miter"/>
<polygon points="214.5,1251.2 244.5,1268.7 214.5,1286.2" fill="#000"/>
<polyline points="638.9,1268.7 737.0,1268.7" fill="none" stroke="#222222" stroke-width="3.9" stroke-linejoin="miter"/>
<polygon points="736.0,1251.2 766.0,1268.7 736.0,1286.2" fill="#000"/>
<polyline points="847.8,1268.7 930.0,1268.7" fill="none" stroke="#222222" stroke-width="3.9" stroke-linejoin="miter"/>
<polygon points="928.8,1251.2 959.0,1268.7 928.8,1286.2" fill="#000"/>
<polyline points="111.2,1320.3 215.0,1320.3" fill="none" stroke="#222222" stroke-width="3.9" stroke-linejoin="miter"/>
<polygon points="214.5,1302.8 244.5,1320.3 214.5,1337.8" fill="#000"/>
<polyline points="638.9,1320.3 737.0,1320.3" fill="none" stroke="#222222" stroke-width="3.9" stroke-linejoin="miter"/>
<polygon points="736.0,1302.8 766.0,1320.3 736.0,1337.8" fill="#000"/>
<polyline points="834.4,1320.3 930.0,1320.3" fill="none" stroke="#222222" stroke-width="3.9" stroke-linejoin="miter"/>
<polygon points="928.8,1302.8 959.0,1320.3 928.8,1337.8" fill="#000"/>
<polyline points="111.2,1371.9 215.0,1371.9" fill="none" stroke="#222222" stroke-width="3.9" stroke-linejoin="miter"/>
<polygon points="214.5,1354.4 244.5,1371.9 214.5,1389.4" fill="#000"/>
<polyline points="638.9,1371.9 737.0,1371.9" fill="none" stroke="#222222" stroke-width="3.9" stroke-linejoin="miter"/>
<polygon points="736.0,1354.4 766.0,1371.9 736.0,1389.4" fill="#000"/>
<polyline points="847.8,1371.9 930.0,1371.9" fill="none" stroke="#222222" stroke-width="3.9" stroke-linejoin="miter"/>
<polygon points="928.8,1354.4 959.0,1371.9 928.8,1389.4" fill="#000"/>
<polyline points="111.2,1423.5 215.0,1423.5" fill="none" stroke="#222222" stroke-width="3.9" stroke-linejoin="miter"/>
<polygon points="214.5,1406.0 244.5,1423.5 214.5,1441.0" fill="#000"/>
<polyline points="638.9,1423.5 737.0,1423.5" fill="none" stroke="#222222" stroke-width="3.9" stroke-linejoin="miter"/>
<polygon points="736.0,1406.0 766.0,1423.5 736.0,1441.0" fill="#000"/>
<polyline points="847.8,1423.5 930.0,1423.5" fill="none" stroke="#222222" stroke-width="3.9" stroke-linejoin="miter"/>
<polygon points="928.8,1406.0 959.0,1423.5 928.8,1441.0" fill="#000"/>
<polyline points="111.2,1475.1 215.0,1475.1" fill="none" stroke="#222222" stroke-width="3.9" stroke-linejoin="miter"/>
<polygon points="214.5,1457.6 244.5,1475.1 214.5,1492.6" fill="#000"/>
<polyline points="638.9,1475.1 737.0,1475.1" fill="none" stroke="#222222" stroke-width="3.9" stroke-linejoin="miter"/>
<polygon points="736.0,1457.6 766.0,1475.1 736.0,1492.6" fill="#000"/>
<polyline points="834.4,1475.1 930.0,1475.1" fill="none" stroke="#222222" stroke-width="3.9" stroke-linejoin="miter"/>
<polygon points="928.8,1457.6 959.0,1475.1 928.8,1492.6" fill="#000"/>
<polyline points="111.2,1526.7 215.0,1526.7" fill="none" stroke="#222222" stroke-width="3.9" stroke-linejoin="miter"/>
<polygon points="214.5,1509.2 244.5,1526.7 214.5,1544.2" fill="#000"/>
<polyline points="638.9,1526.7 737.0,1526.7" fill="none" stroke="#222222" stroke-width="3.9" stroke-linejoin="miter"/>
<polygon points="736.0,1509.2 766.0,1526.7 736.0,1544.2" fill="#000"/>
<polyline points="847.8,1526.7 930.0,1526.7" fill="none" stroke="#222222" stroke-width="3.9" stroke-linejoin="miter"/>
<polygon points="928.8,1509.2 959.0,1526.7 928.8,1544.2" fill="#000"/>
<polyline points="111.2,1578.3 215.0,1578.3" fill="none" stroke="#222222" stroke-width="3.9" stroke-linejoin="miter"/>
<polygon points="214.5,1560.8 244.5,1578.3 214.5,1595.8" fill="#000"/>
<polyline points="638.9,1578.3 737.0,1578.3" fill="none" stroke="#222222" stroke-width="3.9" stroke-linejoin="miter"/>
<polygon points="736.0,1560.8 766.0,1578.3 736.0,1595.8" fill="#000"/>
<polyline points="847.8,1578.3 930.0,1578.3" fill="none" stroke="#222222" stroke-width="3.9" stroke-linejoin="miter"/>
<polygon points="928.8,1560.8 959.0,1578.3 928.8,1595.8" fill="#000"/>
<polyline points="111.2,1629.9 215.0,1629.9" fill="none" stroke="#222222" stroke-width="3.9" stroke-linejoin="miter"/>
<polygon points="214.5,1612.4 244.5,1629.9 214.5,1647.4" fill="#000"/>
<polyline points="638.9,1629.9 737.0,1629.9" fill="none" stroke="#222222" stroke-width="3.9" stroke-linejoin="miter"/>
<polygon points="736.0,1612.4 766.0,1629.9 736.0,1647.4" fill="#000"/>
<polyline points="834.4,1629.9 930.0,1629.9" fill="none" stroke="#222222" stroke-width="3.9" stroke-linejoin="miter"/>
<polygon points="928.8,1612.4 959.0,1629.9 928.8,1647.4" fill="#000"/>
<polyline points="111.2,1681.5 215.0,1681.5" fill="none" stroke="#222222" stroke-width="3.9" stroke-linejoin="miter"/>
<polygon points="214.5,1664.0 244.5,1681.5 214.5,1699.0" fill="#000"/>
<polyline points="638.9,1681.5 737.0,1681.5" fill="none" stroke="#222222" stroke-width="3.9" stroke-linejoin="miter"/>
<polygon points="736.0,1664.0 766.0,1681.5 736.0,1699.0" fill="#000"/>
<polyline points="847.8,1681.5 930.0,1681.5" fill="none" stroke="#222222" stroke-width="3.9" stroke-linejoin="miter"/>
<polygon points="928.8,1664.0 959.0,1681.5 928.8,1699.0" fill="#000"/>
<text transform="translate(81.6,329.0) scale(0.86,1.09)" x="0" y="0" font-size="44" text-anchor="middle" fill="#363636">0</text>
<text transform="translate(441.8,329.0) scale(1,1.09)" x="0" y="0" font-size="44" text-anchor="middle" fill="#363636" textLength="354.0" lengthAdjust="spacingAndGlyphs">parameterUnknown</text>
<text transform="translate(806.5,329.0) scale(0.93,1.09)" x="0" y="0" font-size="44" text-anchor="middle" fill="#363636">p1</text>
<text transform="translate(1254.5,329.0) scale(0.93,1.09)" x="0" y="0" font-size="44" text-anchor="end" fill="#363636">.712323</text>
<text transform="translate(99.0,380.6) scale(0.86,1.09)" x="0" y="0" font-size="44" text-anchor="middle" fill="#363636">0.1</text>
<text transform="translate(441.8,380.6) scale(1,1.09)" x="0" y="0" font-size="44" text-anchor="middle" fill="#363636" textLength="354.0" lengthAdjust="spacingAndGlyphs">parameterUnknown</text>
<text transform="translate(799.8,380.6) scale(0.93,1.09)" x="0" y="0" font-size="44" text-anchor="middle" fill="#363636">i1</text>
<text transform="translate(1254.5,380.6) scale(0.93,1.09)" x="0" y="0" font-size="44" text-anchor="end" fill="#363636">.232063</text>
<text transform="translate(81.6,432.2) scale(0.86,1.09)" x="0" y="0" font-size="44" text-anchor="middle" fill="#363636">0</text>
<text transform="translate(441.8,432.2) scale(1,1.09)" x="0" y="0" font-size="44" text-anchor="middle" fill="#363636" textLength="354.0" lengthAdjust="spacingAndGlyphs">parameterUnknown</text>
<text transform="translate(806.5,432.2) scale(0.93,1.09)" x="0" y="0" font-size="44" text-anchor="middle" fill="#363636">d1</text>
<text transform="translate(1254.5,432.2) scale(0.93,1.09)" x="0" y="0" font-size="44" text-anchor="end" fill="#363636">1.6115</text>
<text transform="translate(81.6,483.8) scale(0.86,1.09)" x="0" y="0" font-size="44" text-anchor="middle" fill="#363636">0</text>
<text transform="translate(441.8,483.8) scale(1,1.09)" x="0" y="0" font-size="44" text-anchor="middle" fill="#363636" textLength="354.0" lengthAdjust="spacingAndGlyphs">parameterUnknown</text>
<text transform="translate(806.5,483.8) scale(0.93,1.09)" x="0" y="0" font-size="44" text-anchor="middle" fill="#363636">p5</text>
<text transform="translate(1254.5,483.8) scale(0.93,1.09)" x="0" y="0" font-size="44" text-anchor="end" fill="#363636">.677201</text>
<text transform="translate(99.0,535.4) scale(0.86,1.09)" x="0" y="0" font-size="44" text-anchor="middle" fill="#363636">0.1</text>
<text transform="translate(441.8,535.4) scale(1,1.09)" x="0" y="0" font-size="44" text-anchor="middle" fill="#363636" textLength="354.0" lengthAdjust="spacingAndGlyphs">parameterUnknown</text>
<text transform="translate(799.8,535.4) scale(0.93,1.09)" x="0" y="0" font-size="44" text-anchor="middle" fill="#363636">i5</text>
<text transform="translate(1254.5,535.4) scale(0.93,1.09)" x="0" y="0" font-size="44" text-anchor="end" fill="#363636">.10164</text>
<text transform="translate(81.6,587.0) scale(0.86,1.09)" x="0" y="0" font-size="44" text-anchor="middle" fill="#363636">0</text>
<text transform="translate(441.8,587.0) scale(1,1.09)" x="0" y="0" font-size="44" text-anchor="middle" fill="#363636" textLength="354.0" lengthAdjust="spacingAndGlyphs">parameterUnknown</text>
<text transform="translate(806.5,587.0) scale(0.93,1.09)" x="0" y="0" font-size="44" text-anchor="middle" fill="#363636">d5</text>
<text transform="translate(1254.5,587.0) scale(0.93,1.09)" x="0" y="0" font-size="44" text-anchor="end" fill="#363636">.455999</text>
<text transform="translate(81.6,638.6) scale(0.86,1.09)" x="0" y="0" font-size="44" text-anchor="middle" fill="#363636">0</text>
<text transform="translate(441.8,638.6) scale(1,1.09)" x="0" y="0" font-size="44" text-anchor="middle" fill="#363636" textLength="354.0" lengthAdjust="spacingAndGlyphs">parameterUnknown</text>
<text transform="translate(806.5,638.6) scale(0.93,1.09)" x="0" y="0" font-size="44" text-anchor="middle" fill="#363636">p9</text>
<text transform="translate(1254.5,638.6) scale(0.93,1.09)" x="0" y="0" font-size="44" text-anchor="end" fill="#363636">.16026</text>
<text transform="translate(99.0,690.2) scale(0.86,1.09)" x="0" y="0" font-size="44" text-anchor="middle" fill="#363636">0.1</text>
<text transform="translate(441.8,690.2) scale(1,1.09)" x="0" y="0" font-size="44" text-anchor="middle" fill="#363636" textLength="354.0" lengthAdjust="spacingAndGlyphs">parameterUnknown</text>
<text transform="translate(799.8,690.2) scale(0.93,1.09)" x="0" y="0" font-size="44" text-anchor="middle" fill="#363636">i9</text>
<text transform="translate(1254.5,690.2) scale(0.93,1.09)" x="0" y="0" font-size="44" text-anchor="end" fill="#363636">.114717</text>
<text transform="translate(81.6,741.8) scale(0.86,1.09)" x="0" y="0" font-size="44" text-anchor="middle" fill="#363636">0</text>
<text transform="translate(441.8,741.8) scale(1,1.09)" x="0" y="0" font-size="44" text-anchor="middle" fill="#363636" textLength="354.0" lengthAdjust="spacingAndGlyphs">parameterUnknown</text>
<text transform="translate(806.5,741.8) scale(0.93,1.09)" x="0" y="0" font-size="44" text-anchor="middle" fill="#363636">d9</text>
<text transform="translate(1254.5,741.8) scale(0.93,1.09)" x="0" y="0" font-size="44" text-anchor="end" fill="#363636">-.266624</text>
<text transform="translate(81.6,818.8) scale(0.86,1.09)" x="0" y="0" font-size="44" text-anchor="middle" fill="#363636">0</text>
<text transform="translate(441.8,818.8) scale(1,1.09)" x="0" y="0" font-size="44" text-anchor="middle" fill="#363636" textLength="354.0" lengthAdjust="spacingAndGlyphs">parameterUnknown</text>
<text transform="translate(806.5,818.8) scale(0.93,1.09)" x="0" y="0" font-size="44" text-anchor="middle" fill="#363636">p2</text>
<text transform="translate(1254.5,818.8) scale(0.93,1.09)" x="0" y="0" font-size="44" text-anchor="end" fill="#363636">.694243</text>
<text transform="translate(81.6,870.4) scale(0.86,1.09)" x="0" y="0" font-size="44" text-anchor="middle" fill="#363636">0</text>
<text transform="translate(441.8,870.4) scale(1,1.09)" x="0" y="0" font-size="44" text-anchor="middle" fill="#363636" textLength="354.0" lengthAdjust="spacingAndGlyphs">parameterUnknown</text>
<text transform="translate(799.8,870.4) scale(0.93,1.09)" x="0" y="0" font-size="44" text-anchor="middle" fill="#363636">i2</text>
<text transform="translate(1254.5,870.4) scale(0.93,1.09)" x="0" y="0" font-size="44" text-anchor="end" fill="#363636">-4.34444e-3</text>
<text transform="translate(81.6,922.0) scale(0.86,1.09)" x="0" y="0" font-size="44" text-anchor="middle" fill="#363636">0</text>
<text transform="translate(441.8,922.0) scale(1,1.09)" x="0" y="0" font-size="44" text-anchor="middle" fill="#363636" textLength="354.0" lengthAdjust="spacingAndGlyphs">parameterUnknown</text>
<text transform="translate(806.5,922.0) scale(0.93,1.09)" x="0" y="0" font-size="44" text-anchor="middle" fill="#363636">d2</text>
<text transform="translate(1254.5,922.0) scale(0.93,1.09)" x="0" y="0" font-size="44" text-anchor="end" fill="#363636">-.401696</text>
<text transform="translate(81.6,973.6) scale(0.86,1.09)" x="0" y="0" font-size="44" text-anchor="middle" fill="#363636">0</text>
<text transform="translate(441.8,973.6) scale(1,1.09)" x="0" y="0" font-size="44" text-anchor="middle" fill="#363636" textLength="354.0" lengthAdjust="spacingAndGlyphs">parameterUnknown</text>
<text transform="translate(806.5,973.6) scale(0.93,1.09)" x="0" y="0" font-size="44" text-anchor="middle" fill="#363636">p3</text>
<text transform="translate(1254.5,973.6) scale(0.93,1.09)" x="0" y="0" font-size="44" text-anchor="end" fill="#363636">-5.14077e-3</text>
<text transform="translate(81.6,1025.2) scale(0.86,1.09)" x="0" y="0" font-size="44" text-anchor="middle" fill="#363636">0</text>
<text transform="translate(441.8,1025.2) scale(1,1.09)" x="0" y="0" font-size="44" text-anchor="middle" fill="#363636" textLength="354.0" lengthAdjust="spacingAndGlyphs">parameterUnknown</text>
<text transform="translate(799.8,1025.2) scale(0.93,1.09)" x="0" y="0" font-size="44" text-anchor="middle" fill="#363636">i3</text>
<text transform="translate(1254.5,1025.2) scale(0.93,1.09)" x="0" y="0" font-size="44" text-anchor="end" fill="#363636">3.60916e-2</text>
<text transform="translate(81.6,1076.8) scale(0.86,1.09)" x="0" y="0" font-size="44" text-anchor="middle" fill="#363636">0</text>
<text transform="translate(441.8,1076.8) scale(1,1.09)" x="0" y="0" font-size="44" text-anchor="middle" fill="#363636" textLength="354.0" lengthAdjust="spacingAndGlyphs">parameterUnknown</text>
<text transform="translate(806.5,1076.8) scale(0.93,1.09)" x="0" y="0" font-size="44" text-anchor="middle" fill="#363636">d3</text>
<text transform="translate(1254.5,1076.8) scale(0.93,1.09)" x="0" y="0" font-size="44" text-anchor="end" fill="#363636">-.134173</text>
<text transform="translate(81.6,1128.4) scale(0.86,1.09)" x="0" y="0" font-size="44" text-anchor="middle" fill="#363636">0</text>
<text transform="translate(441.8,1128.4) scale(1,1.09)" x="0" y="0" font-size="44" text-anchor="middle" fill="#363636" textLength="354.0" lengthAdjust="spacingAndGlyphs">parameterUnknown</text>
<text transform="translate(806.5,1128.4) scale(0.93,1.09)" x="0" y="0" font-size="44" text-anchor="middle" fill="#363636">p4</text>
<text transform="translate(1254.5,1128.4) scale(0.93,1.09)" x="0" y="0" font-size="44" text-anchor="end" fill="#363636">-3.78668e-2</text>
<text transform="translate(81.6,1180.0) scale(0.86,1.09)" x="0" y="0" font-size="44" text-anchor="middle" fill="#363636">0</text>
<text transform="translate(441.8,1180.0) scale(1,1.09)" x="0" y="0" font-size="44" text-anchor="middle" fill="#363636" textLength="354.0" lengthAdjust="spacingAndGlyphs">parameterUnknown</text>
<text transform="translate(799.8,1180.0) scale(0.93,1.09)" x="0" y="0" font-size="44" text-anchor="middle" fill="#363636">i4</text>
<text transform="translate(1254.5,1180.0) scale(0.93,1.09)" x="0" y="0" font-size="44" text-anchor="end" fill="#363636">9.36156e-7</text>
<text transform="translate(81.6,1231.6) scale(0.86,1.09)" x="0" y="0" font-size="44" text-anchor="middle" fill="#363636">0</text>
<text transform="translate(441.8,1231.6) scale(1,1.09)" x="0" y="0" font-size="44" text-anchor="middle" fill="#363636" textLength="354.0" lengthAdjust="spacingAndGlyphs">parameterUnknown</text>
<text transform="translate(806.5,1231.6) scale(0.93,1.09)" x="0" y="0" font-size="44" text-anchor="middle" fill="#363636">d4</text>
<text transform="translate(1254.5,1231.6) scale(0.93,1.09)" x="0" y="0" font-size="44" text-anchor="end" fill="#363636">-9.92285e-4</text>
<text transform="translate(81.6,1283.2) scale(0.86,1.09)" x="0" y="0" font-size="44" text-anchor="middle" fill="#363636">0</text>
<text transform="translate(441.8,1283.2) scale(1,1.09)" x="0" y="0" font-size="44" text-anchor="middle" fill="#363636" textLength="354.0" lengthAdjust="spacingAndGlyphs">parameterUnknown</text>
<text transform="translate(806.5,1283.2) scale(0.93,1.09)" x="0" y="0" font-size="44" text-anchor="middle" fill="#363636">p6</text>
<text transform="translate(1254.5,1283.2) scale(0.93,1.09)" x="0" y="0" font-size="44" text-anchor="end" fill="#363636">-2.18409e-2</text>
<text transform="translate(81.6,1334.8) scale(0.86,1.09)" x="0" y="0" font-size="44" text-anchor="middle" fill="#363636">0</text>
<text transform="translate(441.8,1334.8) scale(1,1.09)" x="0" y="0" font-size="44" text-anchor="middle" fill="#363636" textLength="354.0" lengthAdjust="spacingAndGlyphs">parameterUnknown</text>
<text transform="translate(799.8,1334.8) scale(0.93,1.09)" x="0" y="0" font-size="44" text-anchor="middle" fill="#363636">i6</text>
<text transform="translate(1254.5,1334.8) scale(0.93,1.09)" x="0" y="0" font-size="44" text-anchor="end" fill="#363636">-3.92008e-6</text>
<text transform="translate(81.6,1386.4) scale(0.86,1.09)" x="0" y="0" font-size="44" text-anchor="middle" fill="#363636">0</text>
<text transform="translate(441.8,1386.4) scale(1,1.09)" x="0" y="0" font-size="44" text-anchor="middle" fill="#363636" textLength="354.0" lengthAdjust="spacingAndGlyphs">parameterUnknown</text>
<text transform="translate(806.5,1386.4) scale(0.93,1.09)" x="0" y="0" font-size="44" text-anchor="middle" fill="#363636">d6</text>
<text transform="translate(1254.5,1386.4) scale(0.93,1.09)" x="0" y="0" font-size="44" text-anchor="end" fill="#363636">1.43287e-3</text>
<text transform="translate(81.6,1438.0) scale(0.86,1.09)" x="0" y="0" font-size="44" text-anchor="middle" fill="#363636">0</text>
<text transform="translate(441.8,1438.0) scale(1,1.09)" x="0" y="0" font-size="44" text-anchor="middle" fill="#363636" textLength="354.0" lengthAdjust="spacingAndGlyphs">parameterUnknown</text>
<text transform="translate(806.5,1438.0) scale(0.93,1.09)" x="0" y="0" font-size="44" text-anchor="middle" fill="#363636">p7</text>
<text transform="translate(1254.5,1438.0) scale(0.93,1.09)" x="0" y="0" font-size="44" text-anchor="end" fill="#363636">-2.65489e-4</text>
<text transform="translate(81.6,1489.6) scale(0.86,1.09)" x="0" y="0" font-size="44" text-anchor="middle" fill="#363636">0</text>
<text transform="translate(441.8,1489.6) scale(1,1.09)" x="0" y="0" font-size="44" text-anchor="middle" fill="#363636" textLength="354.0" lengthAdjust="spacingAndGlyphs">parameterUnknown</text>
<text transform="translate(799.8,1489.6) scale(0.93,1.09)" x="0" y="0" font-size="44" text-anchor="middle" fill="#363636">i7</text>
<text transform="translate(1254.5,1489.6) scale(0.93,1.09)" x="0" y="0" font-size="44" text-anchor="end" fill="#363636">2.01183e-2</text>
<text transform="translate(81.6,1541.2) scale(0.86,1.09)" x="0" y="0" font-size="44" text-anchor="middle" fill="#363636">0</text>
<text transform="translate(441.8,1541.2) scale(1,1.09)" x="0" y="0" font-size="44" text-anchor="middle" fill="#363636" textLength="354.0" lengthAdjust="spacingAndGlyphs">parameterUnknown</text>
<text transform="translate(806.5,1541.2) scale(0.93,1.09)" x="0" y="0" font-size="44" text-anchor="middle" fill="#363636">d7</text>
<text transform="translate(1254.5,1541.2) scale(0.93,1.09)" x="0" y="0" font-size="44" text-anchor="end" fill="#363636">6.27112e-5</text>
<text transform="translate(81.6,1592.8) scale(0.86,1.09)" x="0" y="0" font-size="44" text-anchor="middle" fill="#363636">0</text>
<text transform="translate(441.8,1592.8) scale(1,1.09)" x="0" y="0" font-size="44" text-anchor="middle" fill="#363636" textLength="354.0" lengthAdjust="spacingAndGlyphs">parameterUnknown</text>
<text transform="translate(806.5,1592.8) scale(0.93,1.09)" x="0" y="0" font-size="44" text-anchor="middle" fill="#363636">p8</text>
<text transform="translate(1254.5,1592.8) scale(0.93,1.09)" x="0" y="0" font-size="44" text-anchor="end" fill="#363636">2.39371e-2</text>
<text transform="translate(81.6,1644.4) scale(0.86,1.09)" x="0" y="0" font-size="44" text-anchor="middle" fill="#363636">0</text>
<text transform="translate(441.8,1644.4) scale(1,1.09)" x="0" y="0" font-size="44" text-anchor="middle" fill="#363636" textLength="354.0" lengthAdjust="spacingAndGlyphs">parameterUnknown</text>
<text transform="translate(799.8,1644.4) scale(0.93,1.09)" x="0" y="0" font-size="44" text-anchor="middle" fill="#363636">i8</text>
<text transform="translate(1254.5,1644.4) scale(0.93,1.09)" x="0" y="0" font-size="44" text-anchor="end" fill="#363636">-1.83296e-2</text>
<text transform="translate(81.6,1696.0) scale(0.86,1.09)" x="0" y="0" font-size="44" text-anchor="middle" fill="#363636">0</text>
<text transform="translate(441.8,1696.0) scale(1,1.09)" x="0" y="0" font-size="44" text-anchor="middle" fill="#363636" textLength="354.0" lengthAdjust="spacingAndGlyphs">parameterUnknown</text>
<text transform="translate(806.5,1696.0) scale(0.93,1.09)" x="0" y="0" font-size="44" text-anchor="middle" fill="#363636">d8</text>
<text transform="translate(1254.5,1696.0) scale(0.93,1.09)" x="0" y="0" font-size="44" text-anchor="end" fill="#363636">-2.01622e-3</text>
<rect x="765.0" y="55.6" width="77.0" height="51.9" fill="#8a8a8a"/>
<rect x="766.8" y="57.4" width="73.4" height="48.3" fill="#222222"/>
<rect x="769.4" y="60.0" width="68.2" height="42.1" fill="#fff"/>
<polyline points="774.6,95.7 791.9,95.7 791.9,66.8 832.6,66.8" fill="none" stroke="#4444ff" stroke-width="3.6" stroke-linejoin="miter"/>
<rect x="745.7" y="133.4" width="76.3" height="51.6" fill="#8a8a8a"/>
<rect x="747.5" y="135.2" width="72.7" height="48.0" fill="#222222"/>
<rect x="750.1" y="137.8" width="67.5" height="41.8" fill="#fff"/>
<polyline points="755.3,173.5 772.6,173.5 772.6,144.6 813.3,144.6" fill="none" stroke="#4444ff" stroke-width="3.6" stroke-linejoin="miter"/>
<rect x="765.0" y="210.4" width="77.0" height="51.9" fill="#8a8a8a"/>
<rect x="766.8" y="212.2" width="73.4" height="48.3" fill="#222222"/>
<rect x="769.4" y="214.8" width="68.2" height="42.1" fill="#fff"/>
<polyline points="774.6,250.5 791.9,250.5 791.9,221.6 832.6,221.6" fill="none" stroke="#4444ff" stroke-width="3.6" stroke-linejoin="miter"/>
<polyline points="842.0,82.4 958.9,82.4 958.9,108.3 1027.0,108.3" fill="none" stroke="#222222" stroke-width="3.9" stroke-linejoin="miter"/>
<polygon points="1026.3,90.8 1055.0,108.3 1026.3,125.8" fill="#000"/>
<polyline points="822.0,159.4 1027.0,159.4" fill="none" stroke="#222222" stroke-width="3.9" stroke-linejoin="miter"/>
<polygon points="1026.3,141.9 1055.0,159.4 1026.3,176.9" fill="#000"/>
<polyline points="842.0,237.2 958.9,237.2 958.9,212.1 1027.0,212.1" fill="none" stroke="#222222" stroke-width="3.9" stroke-linejoin="miter"/>
<polygon points="1026.3,194.6 1055.0,212.1 1026.3,229.6" fill="#000"/>
<rect x="1054.7" y="81.2" width="205.5" height="154.8" fill="#2b5c5c"/>
<rect x="1058.2" y="84.7" width="198.5" height="147.8" fill="#00ffff"/>
<text transform="translate(1157.0,175.5) scale(1,1.09)" x="0" y="0" font-size="44" text-anchor="middle" fill="#0a3434" textLength="163.0" lengthAdjust="spacingAndGlyphs">System1</text>
<polyline points="1260.0,108.7 1371.7,108.7 1371.7,150.6 1414.0,150.6" fill="none" stroke="#222222" stroke-width="3.9" stroke-linejoin="miter"/>
<polyline points="1260.0,159.6 1361.8,159.6 1361.8,382.6 1414.0,382.6" fill="none" stroke="#222222" stroke-width="3.9" stroke-linejoin="miter"/>
<polyline points="1260.0,212.0 1352.5,212.0 1352.5,1774.4 1414.0,1774.4" fill="none" stroke="#222222" stroke-width="3.9" stroke-linejoin="miter"/>
<polygon points="1413.5,133.6 1440.5,150.6 1413.5,167.6" fill="#ff0000" stroke="#000" stroke-width="1.6" stroke-linejoin="miter"/>
<rect x="1411.8" y="132.6" width="3.4" height="36" fill="#000"/>
<polygon points="1413.5,365.6 1440.5,382.6 1413.5,399.6" fill="#0000ff" stroke="#000" stroke-width="1.6" stroke-linejoin="miter"/>
<rect x="1411.8" y="364.6" width="3.4" height="36" fill="#000"/>
<polyline points="1402.0,614.5 1414.0,614.5" fill="none" stroke="#111" stroke-width="3.2" stroke-linejoin="miter"/>
<polygon points="1413.5,597.5 1440.5,614.5 1413.5,631.5" fill="#00ff00" stroke="#000" stroke-width="1.6" stroke-linejoin="miter"/>
<rect x="1411.8" y="596.5" width="3.4" height="36" fill="#000"/>
<polyline points="1402.0,846.5 1414.0,846.5" fill="none" stroke="#111" stroke-width="3.2" stroke-linejoin="miter"/>
<polygon points="1413.5,829.5 1440.5,846.5 1413.5,863.5" fill="#ff00ff" stroke="#000" stroke-width="1.6" stroke-linejoin="miter"/>
<rect x="1411.8" y="828.5" width="3.4" height="36" fill="#000"/>
<polyline points="1402.0,1078.5 1414.0,1078.5" fill="none" stroke="#111" stroke-width="3.2" stroke-linejoin="miter"/>
<polygon points="1413.5,1061.5 1440.5,1078.5 1413.5,1095.5" fill="#00ffff" stroke="#000" stroke-width="1.6" stroke-linejoin="miter"/>
<rect x="1411.8" y="1060.5" width="3.4" height="36" fill="#000"/>
<polyline points="1402.0,1310.4 1414.0,1310.4" fill="none" stroke="#111" stroke-width="3.2" stroke-linejoin="miter"/>
<polygon points="1413.5,1293.4 1440.5,1310.4 1413.5,1327.4" fill="#ffff00" stroke="#000" stroke-width="1.6" stroke-linejoin="miter"/>
<rect x="1411.8" y="1292.4" width="3.4" height="36" fill="#000"/>
<polyline points="1402.0,1542.4 1414.0,1542.4" fill="none" stroke="#111" stroke-width="3.2" stroke-linejoin="miter"/>
<polygon points="1413.5,1525.4 1440.5,1542.4 1413.5,1559.4" fill="#ff8000" stroke="#000" stroke-width="1.6" stroke-linejoin="miter"/>
<rect x="1411.8" y="1524.4" width="3.4" height="36" fill="#000"/>
<polygon points="1413.5,1757.4 1440.5,1774.4 1413.5,1791.4" fill="#800000" stroke="#000" stroke-width="1.6" stroke-linejoin="miter"/>
<rect x="1411.8" y="1756.4" width="3.4" height="36" fill="#000"/>
<defs><linearGradient id="tg" x1="0" y1="0" x2="0" y2="1"><stop offset="0" stop-color="#b8cddd"/><stop offset="1" stop-color="#d0e2f1"/></linearGradient><linearGradient id="bg" x1="0" y1="0" x2="0" y2="1"><stop offset="0" stop-color="#bdd2e3"/><stop offset="1" stop-color="#d6e6f3"/></linearGradient></defs>
<rect x="1440.6" y="46.4" width="2465.1" height="1858.1" fill="#6b6b6b"/>
<rect x="1445.0" y="50.4" width="2456.7" height="1849.1" fill="#d2e3f2"/>
<rect x="1440.6" y="46.4" width="2465.1" height="3.6" fill="#2a2a2a"/>
<polygon points="1440.6,46.4 1454.6,46.4 1440.6,60.4" fill="#111"/>
<polygon points="3905.7,46.4 3891.7,46.4 3905.7,60.4" fill="#111"/>
<rect x="1445.0" y="50.4" width="2456.7" height="95" fill="url(#tg)"/>
<rect x="1466" y="145.5" width="2415" height="1732.7" fill="#ffffff"/>
<defs><linearGradient id="ig" x1="0" y1="0" x2="1" y2="1"><stop offset="0" stop-color="#1f6fb2"/><stop offset="0.5" stop-color="#0f9a8a"/><stop offset="1" stop-color="#00b46a"/></linearGradient><linearGradient id="ig2" x1="0" y1="0" x2="0" y2="1"><stop offset="0" stop-color="#3a78b8"/><stop offset="1" stop-color="#40c080"/></linearGradient></defs>
<rect x="1471.5" y="88.2" width="52.5" height="38.2" fill="#a3acb6"/>
<rect x="1473.8" y="88.2" width="48" height="35.5" fill="#d4d8dc"/>
<rect x="1476.2" y="91.4" width="41.6" height="32" fill="#f6f6f6"/>
<rect x="1473.8" y="123.2" width="48.2" height="3.2" fill="#8c939c"/>
<rect x="1473.8" y="88.2" width="2.6" height="38" fill="#9aa1aa"/>
<rect x="1479" y="93.2" width="20.2" height="28" fill="url(#ig)"/>
<rect x="1502.5" y="97" width="13" height="2" fill="#dedede"/><rect x="1502.5" y="103" width="13" height="2" fill="#dedede"/><rect x="1502.5" y="112" width="13" height="2" fill="#dedede"/><rect x="1502.5" y="117" width="13" height="2" fill="#dedede"/>
<rect x="1512.8" y="93.7" width="6.5" height="17.3" fill="url(#ig2)"/>
<text transform="translate(1538.7,123.4) scale(1,1.05)" x="0" y="0" font-size="38" text-anchor="start" fill="#adb5c0" textLength="65.0" lengthAdjust="spacingAndGlyphs">Plot</text>
<rect x="3555.5" y="80.3" width="95.6" height="54.2" rx="4" ry="4" fill="url(#bg)" stroke="#a6b3bf" stroke-width="3.4"/>
<rect x="3664.9" y="80.3" width="96.6" height="54.2" rx="4" ry="4" fill="url(#bg)" stroke="#8d9fbb" stroke-width="3.4"/>
<rect x="3773.4" y="80.3" width="96.6" height="54.2" rx="4" ry="4" fill="url(#bg)" stroke="#8d9fbb" stroke-width="3.4"/>
<rect x="3587.5" y="105.5" width="30" height="13" rx="2" fill="#dcdcdc" stroke="#707888" stroke-width="3.5"/>
<rect x="3696" y="93.5" width="31" height="25" rx="2" fill="#e6e6e6" stroke="#6a7486" stroke-width="3.5"/>
<rect x="3705" y="101" width="13" height="8" fill="#8796aa"/>
<path d="M3812.5,99 L3830.5,113 M3830.5,99 L3812.5,113" stroke="#6a7384" stroke-width="12" stroke-linecap="square"/>
<path d="M3812.5,99 L3830.5,113 M3830.5,99 L3812.5,113" stroke="#eeeeee" stroke-width="5.5" stroke-linecap="square"/>
<line x1="1748.2" y1="148.3" x2="1748.2" y2="1750.2" stroke="#1a1aff" stroke-width="3.8" stroke-dasharray="9.8 9.49"/>
<line x1="1937.8" y1="148.3" x2="1937.8" y2="1750.2" stroke="#1a1aff" stroke-width="3.8" stroke-dasharray="9.8 9.49"/>
<line x1="2127.3" y1="148.3" x2="2127.3" y2="1750.2" stroke="#1a1aff" stroke-width="3.8" stroke-dasharray="9.8 9.49"/>
<line x1="2317.8" y1="148.3" x2="2317.8" y2="1750.2" stroke="#1a1aff" stroke-width="3.8" stroke-dasharray="9.8 9.49"/>
<line x1="2507.8" y1="148.3" x2="2507.8" y2="1750.2" stroke="#1a1aff" stroke-width="3.8" stroke-dasharray="9.8 9.49"/>
<line x1="2700.4" y1="148.3" x2="2700.4" y2="1750.2" stroke="#1a1aff" stroke-width="3.8" stroke-dasharray="9.8 9.49"/>
<line x1="2891.0" y1="148.3" x2="2891.0" y2="1750.2" stroke="#1a1aff" stroke-width="3.8" stroke-dasharray="9.8 9.49"/>
<line x1="3081.0" y1="148.3" x2="3081.0" y2="1750.2" stroke="#1a1aff" stroke-width="3.8" stroke-dasharray="9.8 9.49"/>
<line x1="3270.6" y1="148.3" x2="3270.6" y2="1750.2" stroke="#1a1aff" stroke-width="3.8" stroke-dasharray="9.8 9.49"/>
<line x1="3460.4" y1="148.3" x2="3460.4" y2="1750.2" stroke="#1a1aff" stroke-width="3.8" stroke-dasharray="9.8 9.49"/>
<line x1="3650.6" y1="148.3" x2="3650.6" y2="1750.2" stroke="#1a1aff" stroke-width="3.8" stroke-dasharray="9.8 9.49"/>
<line x1="1558.1" y1="1612.8" x2="3841.0" y2="1612.8" stroke="#1a1aff" stroke-width="3.8" stroke-dasharray="9.8 9.49"/>
<line x1="1558.1" y1="1474.5" x2="3841.0" y2="1474.5" stroke="#1a1aff" stroke-width="3.8" stroke-dasharray="9.8 9.49"/>
<line x1="1558.1" y1="1336.3" x2="3841.0" y2="1336.3" stroke="#1a1aff" stroke-width="3.8" stroke-dasharray="9.8 9.49"/>
<line x1="1558.1" y1="1194.4" x2="3841.0" y2="1194.4" stroke="#1a1aff" stroke-width="3.8" stroke-dasharray="9.8 9.49"/>
<line x1="1558.1" y1="1056.0" x2="3841.0" y2="1056.0" stroke="#1a1aff" stroke-width="3.8" stroke-dasharray="9.8 9.49"/>
<line x1="1558.1" y1="916.7" x2="3841.0" y2="916.7" stroke="#1a1aff" stroke-width="3.8" stroke-dasharray="9.8 9.49"/>
<line x1="1558.1" y1="775.2" x2="3841.0" y2="775.2" stroke="#1a1aff" stroke-width="3.8" stroke-dasharray="9.8 9.49"/>
<line x1="1558.1" y1="636.3" x2="3841.0" y2="636.3" stroke="#1a1aff" stroke-width="3.8" stroke-dasharray="9.8 9.49"/>
<line x1="1558.1" y1="498.6" x2="3841.0" y2="498.6" stroke="#1a1aff" stroke-width="3.8" stroke-dasharray="9.8 9.49"/>
<line x1="1558.1" y1="356.8" x2="3841.0" y2="356.8" stroke="#1a1aff" stroke-width="3.8" stroke-dasharray="9.8 9.49"/>
<line x1="1558.1" y1="218.7" x2="3841.0" y2="218.7" stroke="#1a1aff" stroke-width="3.8" stroke-dasharray="9.8 9.49"/>
<clipPath id="pc"><rect x="1558.5" y="146.4" width="2284.5" height="1605.8"/></clipPath>
<g clip-path="url(#pc)" fill="none" stroke-width="3.4" stroke-linejoin="round">
<path d="M1559.0,916.5 C1559.7,927.0 1560.3,948.0 1561.0,948.0 C1562.1,948.0 1563.1,894.5 1564.2,860.8 C1565.2,828.1 1566.3,744.4 1567.3,744.4 C1568.9,744.4 1570.4,744.4 1572.0,744.4 C1572.5,744.4 1573.1,642.2 1573.6,634.3 C1574.3,623.5 1575.1,617.0 1575.8,617.0 C1576.9,617.0 1577.9,618.3 1579.0,621.8 C1579.5,623.4 1580.0,665.8 1580.5,675.2 C1581.9,701.0 1583.2,707.2 1584.6,722.4 C1586.2,739.8 1587.7,771.0 1589.3,772.7 C1593.0,776.8 1596.6,775.1 1600.3,778.3 C1602.4,780.1 1604.5,785.4 1606.6,791.5 C1608.1,795.8 1609.5,805.2 1611.0,811.4 C1612.8,819.2 1614.7,830.7 1616.5,833.4 C1619.1,837.2 1621.6,838.4 1624.2,840.0 C1627.1,841.9 1630.1,842.4 1633.0,844.4 C1637.4,847.4 1641.8,855.9 1646.2,859.8 C1651.3,864.4 1656.5,867.5 1661.6,870.8 C1666.7,874.1 1671.9,877.5 1677.0,880.0 C1684.5,883.6 1691.9,886.4 1699.4,889.0 C1704.5,890.8 1709.7,892.8 1714.8,893.8 C1724.8,895.7 1734.7,896.6 1744.7,897.5 C1756.3,898.6 1767.8,899.1 1779.4,900.0 C1793.5,901.1 1807.6,902.5 1821.7,903.7 C1838.3,905.1 1854.8,906.3 1871.4,907.5 C1890.4,908.8 1909.5,910.4 1928.5,911.2 C1955.0,912.3 1981.5,913.2 2008.0,913.7 C2071.0,914.9 2133.9,915.6 2196.9,916.1 C2239.3,916.4 2281.6,916.1 2324.0,916.8 C2325.0,916.8 2325.9,956.8 2326.9,979.0 C2328.3,1011.1 2329.7,1058.9 2331.1,1083.8 C2332.5,1109.3 2334.0,1124.4 2335.4,1143.2 C2336.3,1154.5 2337.1,1175.8 2338.0,1175.8 C2341.4,1175.8 2344.7,1175.8 2348.1,1175.8 C2352.8,1175.8 2357.6,1171.4 2362.3,1165.9 C2365.6,1162.1 2368.9,1141.7 2372.2,1137.6 C2376.4,1132.3 2380.7,1127.7 2384.9,1127.7 C2395.3,1127.7 2405.6,1127.7 2416.0,1127.7 C2421.7,1127.7 2427.3,1119.6 2433.0,1115.0 C2441.5,1108.1 2450.0,1099.5 2458.5,1092.3 C2475.0,1078.3 2491.5,1064.9 2508.0,1052.7 C2521.7,1042.6 2535.3,1032.4 2549.0,1024.4 C2566.0,1014.5 2583.0,1006.8 2600.0,998.9 C2609.0,994.7 2618.0,990.3 2627.0,987.0 C2651.5,978.0 2676.1,971.0 2700.6,964.9 C2730.6,957.4 2760.6,950.3 2790.6,946.0 C2824.1,941.2 2857.7,938.4 2891.2,935.3 C2924.7,932.2 2958.3,929.3 2991.8,927.2 C3021.2,925.4 3050.5,922.8 3079.9,922.8 C3082.0,922.8 3084.1,929.4 3086.2,939.7 C3087.2,944.8 3088.3,983.8 3089.3,983.8 C3090.8,983.8 3092.2,975.7 3093.7,968.0 C3095.8,957.0 3097.9,928.2 3100.0,898.9 C3101.8,874.3 3103.5,830.7 3105.3,799.8 C3106.1,785.2 3107.0,770.7 3107.8,758.1 C3108.7,743.9 3109.7,729.9 3110.6,719.3 C3112.0,703.7 3113.3,689.9 3114.7,680.5 C3116.8,666.2 3118.8,657.1 3120.9,647.8 C3122.3,641.7 3123.6,634.2 3125.0,631.5 C3128.4,624.7 3131.8,619.2 3135.2,619.2 C3140.6,619.2 3146.1,619.2 3151.5,619.2 C3154.9,619.2 3158.3,609.6 3161.7,602.8 C3165.8,594.7 3169.9,581.7 3174.0,570.2 C3178.1,558.7 3182.2,545.4 3186.3,533.4 C3190.4,521.5 3194.4,508.6 3198.5,498.6 C3204.0,485.2 3209.4,473.9 3214.9,463.9 C3221.7,451.4 3228.5,441.4 3235.3,431.2 C3242.1,421.0 3248.9,411.7 3255.7,402.6 C3260.5,396.2 3265.2,389.5 3270.0,384.2 C3280.2,372.9 3290.5,364.6 3300.7,355.6 C3308.9,348.4 3317.0,340.7 3325.2,335.2 C3336.1,327.8 3347.0,322.5 3357.9,316.8 C3371.9,309.5 3386.0,302.1 3400.0,296.3 C3420.2,288.0 3440.4,280.7 3460.6,275.2 C3494.8,265.9 3528.9,259.0 3563.1,253.2 C3592.5,248.2 3621.8,243.9 3651.2,240.6 C3684.7,236.8 3718.3,233.3 3751.8,231.2 C3782.2,229.3 3812.6,228.3 3843.0,226.8" stroke="#a00000"/>
<path d="M1559.0,916.5 C1560.2,926.0 1561.4,945.0 1562.6,945.0 C1563.4,945.0 1564.2,943.1 1565.0,940.0 C1565.8,937.0 1566.5,905.0 1567.3,876.5 C1568.5,830.6 1569.8,676.7 1571.0,644.0 C1572.4,606.9 1573.8,580.6 1575.2,574.6 C1576.2,570.2 1577.3,566.7 1578.3,566.7 C1579.3,566.7 1580.4,570.5 1581.4,574.6 C1582.5,578.8 1583.5,592.4 1584.6,603.0 C1585.4,611.3 1586.3,621.8 1587.1,631.0 C1587.8,639.1 1588.6,654.8 1589.3,654.8 C1590.4,654.8 1591.4,654.8 1592.5,654.8 C1595.1,654.8 1597.7,628.0 1600.3,628.0 C1602.4,628.0 1604.5,632.9 1606.6,636.3 C1608.4,639.3 1610.3,642.4 1612.1,648.0 C1613.2,651.3 1614.3,661.8 1615.4,663.8 C1621.3,674.5 1627.1,675.1 1633.0,680.0 C1642.5,688.0 1652.1,694.2 1661.6,701.5 C1672.6,710.0 1683.7,719.1 1694.7,727.7 C1707.2,737.4 1719.6,747.4 1732.1,756.3 C1746.8,766.7 1761.4,776.4 1776.1,785.5 C1790.8,794.7 1805.5,803.5 1820.2,811.4 C1834.9,819.3 1849.5,827.1 1864.2,833.4 C1878.9,839.7 1893.5,845.4 1908.2,849.9 C1925.5,855.2 1942.7,858.3 1960.0,863.1 C1969.4,865.7 1978.7,869.1 1988.1,871.4 C2004.7,875.4 2021.2,878.6 2037.8,881.4 C2054.4,884.2 2070.9,886.5 2087.5,888.8 C2100.8,890.6 2114.0,892.4 2127.3,893.8 C2147.2,895.8 2167.0,897.0 2186.9,898.8 C2203.5,900.3 2220.0,902.4 2236.6,903.7 C2257.3,905.3 2278.0,907.5 2298.7,907.5 C2305.7,907.5 2312.8,907.5 2319.8,907.5 C2321.2,907.5 2322.6,929.5 2324.0,950.8 C2325.0,965.5 2325.9,1001.9 2326.9,1027.0 C2328.3,1063.4 2329.7,1115.2 2331.1,1134.7 C2332.5,1154.7 2334.0,1164.9 2335.4,1175.8 C2336.3,1182.9 2337.3,1193.8 2338.2,1194.0 C2346.2,1195.4 2354.3,1195.6 2362.3,1195.6 C2364.6,1195.6 2367.0,1181.4 2369.3,1177.0 C2373.5,1169.1 2377.8,1159.7 2382.0,1159.5 C2387.4,1159.3 2392.8,1159.2 2398.2,1159.2 C2402.0,1159.2 2405.9,1163.1 2409.7,1166.4 C2416.3,1172.0 2422.9,1186.2 2429.5,1196.1 C2437.2,1207.7 2445.0,1219.5 2452.7,1230.8 C2461.5,1243.7 2470.3,1256.4 2479.1,1268.8 C2488.7,1282.3 2498.2,1295.8 2507.8,1308.4 C2514.7,1317.5 2521.7,1326.1 2528.6,1334.8 C2538.5,1347.2 2548.4,1360.3 2558.3,1371.2 C2568.2,1382.1 2578.2,1391.9 2588.1,1400.9 C2598.0,1409.9 2607.9,1417.4 2617.8,1425.7 C2627.7,1434.0 2637.6,1443.3 2647.5,1451.0 C2665.1,1464.7 2682.7,1478.3 2700.3,1488.4 C2709.1,1493.5 2718.0,1497.2 2726.8,1501.6 C2737.8,1507.1 2748.8,1513.2 2759.8,1518.1 C2770.8,1523.0 2781.8,1527.2 2792.8,1531.3 C2803.8,1535.4 2814.8,1539.3 2825.8,1542.9 C2836.8,1546.5 2847.9,1549.5 2858.9,1552.8 C2869.7,1556.0 2880.4,1559.9 2891.2,1562.4 C2920.5,1569.2 2949.9,1573.6 2979.2,1578.1 C3011.9,1583.1 3044.6,1582.0 3077.3,1591.0 C3078.5,1591.3 3079.8,1593.4 3081.0,1593.4 C3082.6,1593.4 3084.3,1593.4 3085.9,1593.4 C3086.7,1593.4 3087.5,1612.6 3088.3,1615.4 C3089.9,1621.1 3091.6,1625.1 3093.2,1625.1 C3094.4,1625.1 3095.6,1618.7 3096.8,1612.9 C3098.0,1606.9 3099.3,1591.9 3100.5,1581.2 C3101.7,1570.8 3102.9,1559.9 3104.1,1549.5 C3105.3,1538.8 3106.6,1528.4 3107.8,1517.8 C3109.0,1507.2 3110.3,1497.6 3111.5,1486.1 C3112.3,1478.6 3113.1,1467.8 3113.9,1461.7 C3115.1,1452.3 3116.4,1447.2 3117.6,1439.8 C3118.8,1432.6 3120.0,1424.6 3121.2,1417.8 C3122.4,1410.8 3123.7,1404.9 3124.9,1398.3 C3126.1,1391.9 3127.3,1385.6 3128.5,1378.8 C3129.7,1371.8 3131.0,1360.6 3132.2,1356.8 C3134.2,1350.5 3136.3,1346.6 3138.3,1344.6 C3140.5,1342.4 3142.6,1340.3 3144.8,1340.3 C3150.9,1340.3 3157.1,1356.8 3163.2,1363.2 C3171.0,1371.3 3178.8,1379.3 3186.6,1384.0 C3191.5,1386.9 3196.4,1387.8 3201.3,1390.9 C3208.8,1395.6 3216.3,1405.6 3223.8,1413.4 C3231.9,1421.7 3239.9,1430.9 3248.0,1439.3 C3255.5,1447.1 3262.9,1455.6 3270.4,1462.0 C3286.6,1475.9 3302.7,1486.9 3318.9,1497.0 C3336.2,1507.8 3353.4,1517.9 3370.7,1525.5 C3379.4,1529.3 3388.0,1532.2 3396.7,1535.3 C3417.9,1542.8 3439.1,1550.7 3460.3,1556.3 C3489.3,1564.0 3518.4,1570.6 3547.4,1575.2 C3581.7,1580.6 3616.0,1583.8 3650.3,1587.7 C3684.1,1591.6 3718.0,1596.3 3751.8,1598.7 C3782.2,1600.8 3812.6,1601.9 3843.0,1603.5" stroke="#1010ff"/>
<path d="M1559.0,916.5 C1560.0,927.0 1561.0,948.0 1562.0,948.0 C1563.0,948.0 1564.0,947.1 1565.0,945.0 C1565.8,943.4 1566.5,338.5 1567.3,292.0 C1568.3,229.4 1569.4,195.3 1570.4,191.4 C1571.5,187.4 1572.5,185.0 1573.6,185.0 C1575.0,185.0 1576.3,196.4 1577.7,215.0 C1578.4,225.0 1579.2,275.7 1579.9,317.0 C1580.4,345.1 1580.9,406.5 1581.4,421.0 C1582.5,452.0 1583.5,466.9 1584.6,474.5 C1585.6,481.9 1586.7,488.6 1587.7,488.6 C1589.3,488.6 1590.9,472.9 1592.5,455.6 C1593.4,445.9 1594.3,414.7 1595.2,400.0 C1595.8,390.2 1596.4,378.5 1597.0,375.0 C1597.8,370.1 1598.7,366.4 1599.5,366.0 C1600.7,365.5 1602.0,365.2 1603.2,365.2 C1604.5,365.2 1605.7,373.1 1607.0,377.1 C1608.3,381.1 1609.5,387.4 1610.8,389.1 C1612.0,390.7 1613.3,392.2 1614.5,392.2 C1616.2,392.2 1617.9,388.1 1619.6,384.7 C1621.1,381.7 1622.5,375.6 1624.0,370.8 C1625.2,366.8 1626.5,360.1 1627.7,358.2 C1629.4,355.5 1631.1,354.4 1632.8,353.2 C1635.3,351.5 1637.8,351.2 1640.3,349.4 C1643.2,347.3 1646.2,341.1 1649.1,338.1 C1652.0,335.1 1655.0,332.7 1657.9,330.6 C1661.3,328.2 1664.6,326.4 1668.0,324.3 C1671.3,322.2 1674.7,319.8 1678.0,318.0 C1682.2,315.8 1686.4,314.6 1690.6,312.3 C1694.0,310.5 1697.3,307.2 1700.7,305.4 C1704.9,303.1 1709.1,301.7 1713.3,299.7 C1718.3,297.3 1723.4,294.3 1728.4,292.2 C1734.7,289.5 1740.9,287.5 1747.2,285.3 C1753.5,283.1 1759.8,281.1 1766.1,279.0 C1772.4,276.9 1778.7,274.6 1785.0,272.7 C1792.3,270.6 1799.5,268.9 1806.8,267.0 C1817.5,264.2 1828.3,260.5 1839.0,258.3 C1851.4,255.7 1863.9,254.2 1876.3,252.1 C1890.4,249.7 1904.5,246.8 1918.6,244.7 C1926.9,243.5 1935.1,242.4 1943.4,241.4 C1964.1,238.9 1984.8,236.5 2005.5,234.7 C2018.8,233.5 2032.0,232.7 2045.3,231.7 C2061.9,230.4 2078.4,228.8 2095.0,227.8 C2117.3,226.5 2139.7,225.7 2162.0,224.8 C2198.5,223.4 2234.9,221.0 2271.4,221.0 C2288.4,221.0 2305.3,221.0 2322.3,221.0 C2323.1,221.0 2324.0,243.9 2324.8,257.8 C2326.0,277.2 2327.1,306.0 2328.3,326.2 C2329.1,340.1 2329.9,362.9 2330.7,364.0 C2331.9,365.6 2333.0,366.3 2334.2,366.3 C2335.4,366.3 2336.5,347.0 2337.7,335.7 C2338.5,328.3 2339.2,316.6 2340.0,311.0 C2341.2,302.3 2342.4,293.1 2343.6,292.0 C2345.2,290.5 2346.7,289.7 2348.3,289.7 C2349.9,289.7 2351.4,301.2 2353.0,305.0 C2355.3,310.6 2357.7,318.0 2360.0,318.0 C2362.0,318.0 2364.0,315.9 2366.0,314.4 C2368.8,312.3 2371.5,305.0 2374.3,305.0 C2376.2,305.0 2378.1,307.1 2380.0,307.4 C2384.8,308.1 2389.5,308.5 2394.3,308.5 C2400.6,308.5 2406.9,303.0 2413.2,300.3 C2422.6,296.3 2432.1,292.0 2441.5,288.5 C2450.9,285.0 2460.4,281.2 2469.8,279.0 C2473.2,278.2 2476.6,277.8 2480.0,277.0 C2489.1,275.0 2498.2,271.7 2507.3,269.5 C2518.9,266.7 2530.5,264.5 2542.1,262.0 C2554.5,259.3 2567.0,256.2 2579.4,254.1 C2592.6,251.8 2605.9,250.1 2619.1,248.4 C2636.5,246.1 2653.9,243.9 2671.3,242.2 C2681.2,241.2 2691.2,240.7 2701.1,239.7 C2715.2,238.3 2729.3,236.1 2743.4,234.7 C2758.3,233.2 2773.2,231.8 2788.1,231.0 C2808.8,229.9 2829.5,229.4 2850.2,228.5 C2875.9,227.4 2901.5,225.6 2927.2,224.8 C2968.6,223.4 3010.0,222.7 3051.4,221.8 C3063.1,221.5 3074.8,221.1 3086.5,221.1 C3086.9,221.1 3087.4,238.1 3087.8,239.0 C3089.1,241.8 3090.4,242.8 3091.7,242.8 C3092.8,242.8 3093.9,239.0 3095.0,234.3 C3095.8,230.8 3096.6,214.9 3097.4,207.9 C3098.6,197.1 3099.9,188.9 3101.1,181.5 C3102.1,175.7 3103.0,169.9 3104.0,166.4 C3105.2,162.0 3106.5,156.5 3107.7,156.5 C3109.0,156.5 3110.2,158.5 3111.5,159.8 C3113.4,161.8 3115.3,165.4 3117.2,167.4 C3118.4,168.7 3119.7,170.6 3120.9,170.6 C3126.9,170.6 3132.9,170.4 3138.9,170.4 C3140.5,170.4 3142.0,174.7 3143.6,175.8 C3145.8,177.4 3148.0,179.0 3150.2,179.2 C3160.3,180.2 3170.3,179.8 3180.4,180.5 C3189.2,181.1 3198.0,182.8 3206.8,184.3 C3214.3,185.6 3221.9,187.9 3229.4,189.0 C3243.2,191.0 3256.9,192.1 3270.7,193.5 C3305.3,197.0 3339.9,199.8 3374.5,202.9 C3403.2,205.4 3431.9,208.7 3460.6,210.4 C3507.4,213.2 3554.1,216.0 3600.9,216.7 C3681.6,217.8 3762.3,218.0 3843.0,218.6" stroke="#ff1010"/>
</g>
<rect x="1556.5" y="145.4" width="2288.5" height="4.6" fill="#1e1e1e"/>
<rect x="3841.0" y="145.4" width="4.4" height="1608.8" fill="#141414"/>
<rect x="1556.5" y="145.4" width="4.2" height="1608.8" fill="#505050"/>
<rect x="1556.5" y="1749.6" width="2286.5" height="5.0" fill="#575757"/>
<text transform="translate(1547.0,187.4) scale(0.93,1.09)" x="0" y="0" font-size="44" text-anchor="end" fill="#363636">1.2</text>
<text transform="translate(1547.0,234.5) scale(0.93,1.09)" x="0" y="0" font-size="44" text-anchor="end" fill="#363636">1.0</text>
<text transform="translate(1547.0,372.6) scale(0.93,1.09)" x="0" y="0" font-size="44" text-anchor="end" fill="#363636">.8</text>
<text transform="translate(1547.0,514.4) scale(0.93,1.09)" x="0" y="0" font-size="44" text-anchor="end" fill="#363636">.6</text>
<text transform="translate(1547.0,652.1) scale(0.93,1.09)" x="0" y="0" font-size="44" text-anchor="end" fill="#363636">.4</text>
<text transform="translate(1547.0,791.0) scale(0.93,1.09)" x="0" y="0" font-size="44" text-anchor="end" fill="#363636">.2</text>
<text transform="translate(1547.0,932.5) scale(0.93,1.09)" x="0" y="0" font-size="44" text-anchor="end" fill="#363636">0</text>
<text transform="translate(1547.0,1071.8) scale(0.93,1.09)" x="0" y="0" font-size="44" text-anchor="end" fill="#363636">-.2</text>
<text transform="translate(1547.0,1210.2) scale(0.93,1.09)" x="0" y="0" font-size="44" text-anchor="end" fill="#363636">-.4</text>
<text transform="translate(1547.0,1352.1) scale(0.93,1.09)" x="0" y="0" font-size="44" text-anchor="end" fill="#363636">-.6</text>
<text transform="translate(1547.0,1490.3) scale(0.93,1.09)" x="0" y="0" font-size="44" text-anchor="end" fill="#363636">-.8</text>
<text transform="translate(1547.0,1628.6) scale(0.93,1.09)" x="0" y="0" font-size="44" text-anchor="end" fill="#363636">-1.0</text>
<text transform="translate(1547.0,1766.0) scale(0.93,1.09)" x="0" y="0" font-size="44" text-anchor="end" fill="#363636">-1.2</text>
<text transform="translate(1557.2,1802.9) scale(0.93,1.09)" x="0" y="0" font-size="44" text-anchor="middle" fill="#363636">0</text>
<text transform="translate(1748.2,1802.9) scale(0.93,1.09)" x="0" y="0" font-size="44" text-anchor="middle" fill="#363636">20</text>
<text transform="translate(1937.8,1802.9) scale(0.93,1.09)" x="0" y="0" font-size="44" text-anchor="middle" fill="#363636">40</text>
<text transform="translate(2127.3,1802.9) scale(0.93,1.09)" x="0" y="0" font-size="44" text-anchor="middle" fill="#363636">60</text>
<text transform="translate(2317.8,1802.9) scale(0.93,1.09)" x="0" y="0" font-size="44" text-anchor="middle" fill="#363636">80</text>
<text transform="translate(2507.8,1802.9) scale(0.93,1.09)" x="0" y="0" font-size="44" text-anchor="middle" fill="#363636">100</text>
<text transform="translate(2700.4,1802.9) scale(0.93,1.09)" x="0" y="0" font-size="44" text-anchor="middle" fill="#363636">120</text>
<text transform="translate(2891.0,1802.9) scale(0.93,1.09)" x="0" y="0" font-size="44" text-anchor="middle" fill="#363636">140</text>
<text transform="translate(3081.0,1802.9) scale(0.93,1.09)" x="0" y="0" font-size="44" text-anchor="middle" fill="#363636">160</text>
<text transform="translate(3270.6,1802.9) scale(0.93,1.09)" x="0" y="0" font-size="44" text-anchor="middle" fill="#363636">180</text>
<text transform="translate(3460.4,1802.9) scale(0.93,1.09)" x="0" y="0" font-size="44" text-anchor="middle" fill="#363636">200</text>
<text transform="translate(3650.6,1802.9) scale(0.93,1.09)" x="0" y="0" font-size="44" text-anchor="middle" fill="#363636">220</text>
<text transform="translate(3841.5,1802.9) scale(0.93,1.09)" x="0" y="0" font-size="44" text-anchor="middle" fill="#363636">240</text>
<text transform="translate(2699.5,1857.2) scale(0.93,1.09)" x="0" y="0" font-size="44" text-anchor="middle" fill="#363636">Time (sec)</text>
</svg></div>
</body></html>
